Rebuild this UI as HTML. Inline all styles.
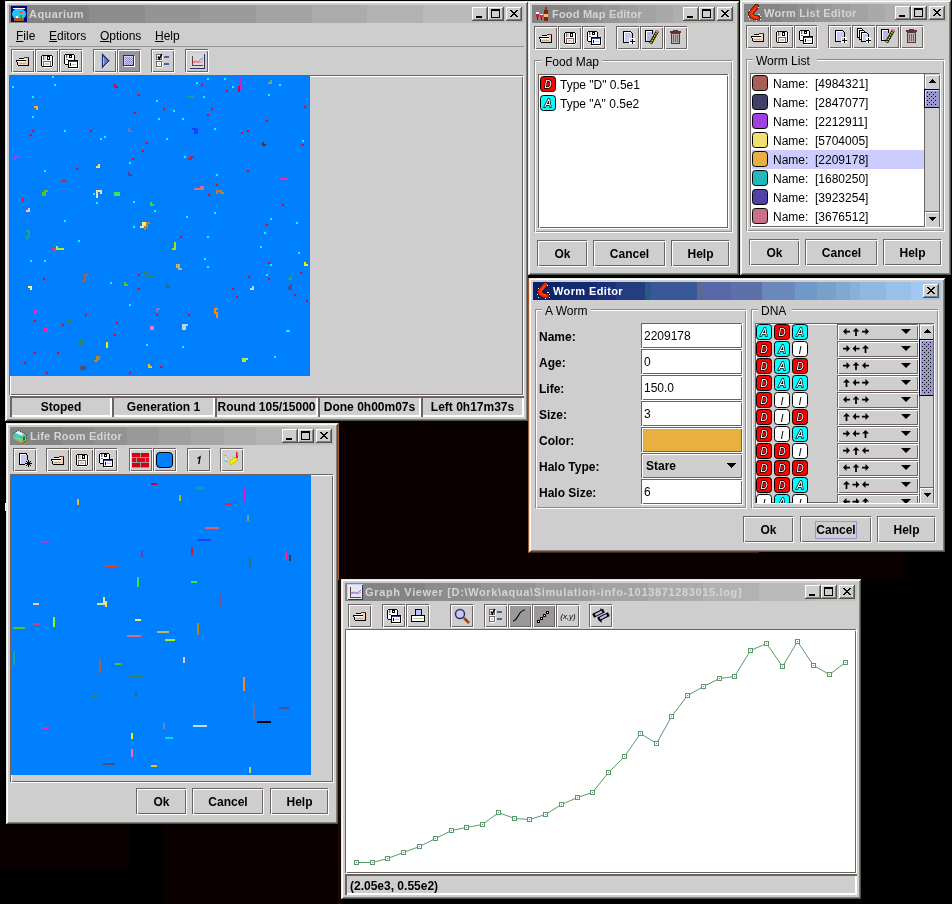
<!DOCTYPE html><html><head><meta charset="utf-8"><style>
html,body{margin:0;padding:0}
body{width:952px;height:904px;position:relative;overflow:hidden;background:#000;font-family:"Liberation Sans",sans-serif}
.a{position:absolute;box-sizing:border-box}
.t{white-space:nowrap}
svg.a{overflow:visible}
</style></head><body><div style="position:absolute;left:0;top:0;width:952px;height:904px;will-change:transform">
<div class="a" style="left:0px;top:421px;width:338px;height:3px;background:#0a0000"></div>
<div class="a" style="left:338px;top:421px;width:191px;height:158px;background:#0a0000"></div>
<div class="a" style="left:529px;top:552px;width:376px;height:27px;background:#0a0000"></div>
<div class="a" style="left:0px;top:824px;width:130px;height:44px;background:#0a0000"></div>
<div class="a" style="left:163px;top:824px;width:178px;height:80px;background:#0a0000"></div>
<div class="a" style="left:338px;top:579px;width:3px;height:325px;background:#1a0804"></div>
<div class="a" style="left:338px;top:423px;width:1px;height:157px;background:#a05828"></div>
<div class="a" style="left:5px;top:503px;width:1px;height:8px;background:#fff"></div>
<div class="a" style="left:528px;top:278px;width:1px;height:275px;background:#a05828"></div>
<div class="a" style="left:529px;top:552px;width:230px;height:1px;background:#4a2410"></div>
<div class="a" style="left:5px;top:1px;width:523px;height:420px;background:#cecece;box-shadow:inset 1px 1px #e4e4e4,inset -1px -1px #4c5446,inset 2px 2px #fff,inset -2px -2px #808080"></div>
<div class="a" style="left:9px;top:5px;width:515px;height:18px;background:linear-gradient(to right,#848484 0px,#848484 80px,#8c8c8c 80px,#8c8c8c 136px,#949494 136px,#949494 191px,#9b9b9b 191px,#9b9b9b 247px,#a3a3a3 247px,#a3a3a3 303px,#ababab 303px,#ababab 358px,#b2b2b2 358px,#b2b2b2 414px,#bababa 414px,#bababa 470px,#c2c2c2 470px,#c2c2c2 515px)"></div>
<svg class="a" style="left:11px;top:6px" width="16" height="16" viewBox="0 0 16 16" shape-rendering="crispEdges"><rect x="0" y="0" width="16" height="16" fill="#000080"/><ellipse cx="8" cy="8" rx="7" ry="6" fill="#20c8ff" shape-rendering="geometricPrecision"/><rect x="2" y="2" width="12" height="1" fill="#fff"/><rect x="8" y="5" width="4" height="2" fill="#ff6010"/><rect x="5" y="10" width="2" height="2" fill="#fff"/><rect x="9" y="9" width="2" height="3" fill="#20b020"/><rect x="3" y="12" width="10" height="3" fill="#a06020"/></svg>
<div class="a t" style="left:29px;top:9px;font-size:11px;line-height:11px;font-weight:bold;color:#d4d4d4;letter-spacing:0.46px">Aquarium</div>
<div class="a" style="left:506px;top:7px;width:16px;height:14px;background:#cecece;box-shadow:inset -1px -1px #4c5446,inset 1px 1px #fff,inset -2px -2px #808080"></div>
<svg class="a" style="left:510px;top:10px" width="8" height="7" viewBox="0 0 8 7" shape-rendering="crispEdges"><path d="M0 0h2v1h1v1h2v-1h1v-1h2v1h-1v1h-1v1h-1v1h1v1h1v1h1v1h-2v-1h-1v-1h-2v1h-1v1h-2v-1h1v-1h1v-1h1v-1h-1v-1h-1v-1h-1z" fill="#000"/></svg>
<div class="a" style="left:488px;top:7px;width:16px;height:14px;background:#cecece;box-shadow:inset -1px -1px #4c5446,inset 1px 1px #fff,inset -2px -2px #808080"></div>
<div class="a" style="left:491px;top:9px;width:9px;height:9px;border:1px solid #000;border-top-width:2px"></div>
<div class="a" style="left:472px;top:7px;width:16px;height:14px;background:#cecece;box-shadow:inset -1px -1px #4c5446,inset 1px 1px #fff,inset -2px -2px #808080"></div>
<div class="a" style="left:476px;top:16px;width:6px;height:2px;background:#000"></div>
<div class="a t" style="left:16px;top:30px;font-size:12px;line-height:12px;font-weight:normal;color:#000;"><u>F</u>ile</div>
<div class="a t" style="left:49px;top:30px;font-size:12px;line-height:12px;font-weight:normal;color:#000;"><u>E</u>ditors</div>
<div class="a t" style="left:100px;top:30px;font-size:12px;line-height:12px;font-weight:normal;color:#000;"><u>O</u>ptions</div>
<div class="a t" style="left:155px;top:30px;font-size:12px;line-height:12px;font-weight:normal;color:#000;"><u>H</u>elp</div>
<div class="a" style="left:9px;top:46px;width:515px;height:1px;background:#999999"></div>
<div class="a" style="left:11px;top:49px;width:23px;height:23px;border:1px solid #6c6462"></div>
<div class="a" style="left:12px;top:50px;width:23px;height:23px;border:1px solid #fff"></div>
<svg class="a" style="left:11px;top:49px" width="24" height="24" viewBox="0 0 24 24" shape-rendering="crispEdges"><rect x="8" y="9" width="5" height="1" fill="#000"/><rect x="13" y="8" width="5" height="1" fill="#703020"/><rect x="17" y="9" width="1" height="8" fill="#000"/><rect x="8" y="10" width="9" height="1" fill="#fff"/><rect x="14" y="9" width="3" height="1" fill="#f0d8b8"/><rect x="5" y="11" width="11" height="1" fill="#000"/><rect x="6" y="12" width="10" height="1" fill="#fff"/><rect x="15" y="10" width="2" height="5" fill="#f0d0a8"/><rect x="5" y="12" width="1" height="1" fill="#000"/><rect x="6" y="13" width="1" height="3" fill="#000"/><rect x="7" y="16" width="11" height="1" fill="#000"/><rect x="7" y="13" width="9" height="3" fill="#f0d8b8"/><rect x="8" y="14" width="7" height="1" fill="#c8a888"/></svg>
<div class="a" style="left:35px;top:49px;width:23px;height:23px;border:1px solid #6c6462"></div>
<div class="a" style="left:36px;top:50px;width:23px;height:23px;border:1px solid #fff"></div>
<svg class="a" style="left:35px;top:49px" width="24" height="24" viewBox="0 0 24 24" shape-rendering="crispEdges"><rect x="7" y="6" width="10" height="1" fill="#000"/><rect x="7" y="17" width="10" height="1" fill="#000"/><rect x="6" y="7" width="1" height="10" fill="#000"/><rect x="17" y="7" width="1" height="10" fill="#000"/><rect x="7" y="7" width="10" height="10" fill="#fff"/><rect x="8" y="7" width="1" height="4" fill="#806860"/><rect x="9" y="7" width="2" height="4" fill="#d0d0d0"/><rect x="12" y="7" width="3" height="4" fill="#000"/><rect x="13" y="8" width="1" height="2" fill="#fff"/><rect x="8" y="12" width="8" height="1" fill="#806860"/><rect x="8" y="12" width="1" height="5" fill="#806860"/><rect x="15" y="12" width="1" height="5" fill="#806860"/><rect x="10" y="14" width="4" height="2" fill="#c8c8c8"/><rect x="8" y="18" width="9" height="1" fill="#fff"/><rect x="18" y="8" width="1" height="9" fill="#fff"/></svg>
<div class="a" style="left:59px;top:49px;width:23px;height:23px;border:1px solid #6c6462"></div>
<div class="a" style="left:60px;top:50px;width:23px;height:23px;border:1px solid #fff"></div>
<svg class="a" style="left:59px;top:49px" width="24" height="24" viewBox="0 0 24 24" shape-rendering="crispEdges"><rect x="6" y="5" width="9" height="1" fill="#000"/><rect x="5" y="6" width="1" height="9" fill="#000"/><rect x="15" y="6" width="1" height="6" fill="#000"/><rect x="6" y="15" width="3" height="1" fill="#000"/><rect x="6" y="6" width="9" height="9" fill="#fff"/><rect x="7" y="6" width="1" height="3" fill="#806860"/><rect x="8" y="6" width="1" height="3" fill="#d0d0d0"/><rect x="10" y="6" width="3" height="3" fill="#000"/><rect x="11" y="7" width="1" height="1" fill="#fff"/><rect x="7" y="10" width="2" height="1" fill="#806860"/><rect x="9" y="11" width="10" height="1" fill="#000"/><rect x="9" y="12" width="1" height="6" fill="#000"/><rect x="18" y="12" width="1" height="6" fill="#000"/><rect x="9" y="18" width="10" height="1" fill="#000"/><rect x="10" y="12" width="8" height="1" fill="#3040a0"/><rect x="10" y="13" width="8" height="5" fill="#fff"/><rect x="11" y="14" width="1" height="3" fill="#000"/><rect x="13" y="15" width="4" height="1" fill="#c0c0c0"/><rect x="10" y="19" width="9" height="1" fill="#fff"/><rect x="19" y="12" width="1" height="7" fill="#fff"/></svg>
<div class="a" style="left:93px;top:49px;width:23px;height:23px;border:1px solid #6c6462"></div>
<div class="a" style="left:94px;top:50px;width:23px;height:23px;border:1px solid #fff"></div>
<svg class="a" style="left:93px;top:49px" width="24" height="24" viewBox="0 0 24 24" shape-rendering="crispEdges"><path d="M9.5 5.5 L16 12 L9.5 18.5 Z" fill="#7080b8" stroke="#1a2a80" stroke-width="1.2" shape-rendering="geometricPrecision"/><rect x="10" y="8" width="1" height="8" fill="#b0b8e8"/><path d="M10 19.3 L16.7 12.6" stroke="#fff" stroke-width="1" shape-rendering="geometricPrecision"/></svg>
<div class="a" style="left:117px;top:49px;width:24px;height:24px;background:#999999"></div>
<div class="a" style="left:117px;top:49px;width:23px;height:23px;border:1px solid #6c6462"></div>
<div class="a" style="left:118px;top:50px;width:23px;height:23px;border:1px solid #fff"></div>
<svg class="a" style="left:117px;top:49px" width="24" height="24" viewBox="0 0 24 24" shape-rendering="crispEdges"><rect x="6" y="6" width="11" height="11" fill="#1a2a80"/><rect x="7" y="7" width="9" height="9" fill="#d0d0ff"/><rect x="8" y="8" width="1" height="1" fill="#8888c0"/><rect x="10" y="8" width="1" height="1" fill="#8888c0"/><rect x="12" y="8" width="1" height="1" fill="#8888c0"/><rect x="14" y="8" width="1" height="1" fill="#8888c0"/><rect x="9" y="9" width="1" height="1" fill="#8888c0"/><rect x="11" y="9" width="1" height="1" fill="#8888c0"/><rect x="13" y="9" width="1" height="1" fill="#8888c0"/><rect x="15" y="9" width="1" height="1" fill="#8888c0"/><rect x="8" y="10" width="1" height="1" fill="#8888c0"/><rect x="10" y="10" width="1" height="1" fill="#8888c0"/><rect x="12" y="10" width="1" height="1" fill="#8888c0"/><rect x="14" y="10" width="1" height="1" fill="#8888c0"/><rect x="9" y="11" width="1" height="1" fill="#8888c0"/><rect x="11" y="11" width="1" height="1" fill="#8888c0"/><rect x="13" y="11" width="1" height="1" fill="#8888c0"/><rect x="15" y="11" width="1" height="1" fill="#8888c0"/><rect x="8" y="12" width="1" height="1" fill="#8888c0"/><rect x="10" y="12" width="1" height="1" fill="#8888c0"/><rect x="12" y="12" width="1" height="1" fill="#8888c0"/><rect x="14" y="12" width="1" height="1" fill="#8888c0"/><rect x="9" y="13" width="1" height="1" fill="#8888c0"/><rect x="11" y="13" width="1" height="1" fill="#8888c0"/><rect x="13" y="13" width="1" height="1" fill="#8888c0"/><rect x="15" y="13" width="1" height="1" fill="#8888c0"/><rect x="8" y="14" width="1" height="1" fill="#8888c0"/><rect x="10" y="14" width="1" height="1" fill="#8888c0"/><rect x="12" y="14" width="1" height="1" fill="#8888c0"/><rect x="14" y="14" width="1" height="1" fill="#8888c0"/><rect x="9" y="15" width="1" height="1" fill="#8888c0"/><rect x="11" y="15" width="1" height="1" fill="#8888c0"/><rect x="13" y="15" width="1" height="1" fill="#8888c0"/><rect x="15" y="15" width="1" height="1" fill="#8888c0"/><rect x="17" y="7" width="1" height="11" fill="#fff"/><rect x="7" y="17" width="11" height="1" fill="#fff"/></svg>
<div class="a" style="left:151px;top:49px;width:23px;height:23px;border:1px solid #6c6462"></div>
<div class="a" style="left:152px;top:50px;width:23px;height:23px;border:1px solid #fff"></div>
<svg class="a" style="left:151px;top:49px" width="24" height="24" viewBox="0 0 24 24" shape-rendering="crispEdges"><rect x="5" y="5" width="6" height="6" fill="#706864"/><rect x="6" y="6" width="4" height="4" fill="#fff"/><rect x="11" y="6" width="1" height="5" fill="#fff"/><rect x="6" y="11" width="5" height="1" fill="#fff"/><path d="M7 7.5 L8.3 9.8 L10.8 5" stroke="#000" stroke-width="1.6" fill="none" shape-rendering="geometricPrecision"/><rect x="5" y="12" width="6" height="6" fill="#706864"/><rect x="6" y="13" width="4" height="4" fill="#fff"/><rect x="7" y="14" width="2" height="2" fill="#d8d8d8"/><rect x="11" y="13" width="1" height="5" fill="#fff"/><rect x="6" y="18" width="5" height="1" fill="#fff"/><rect x="13" y="7" width="5" height="2" fill="#4a62a0"/><rect x="13" y="14" width="5" height="2" fill="#4a62a0"/></svg>
<div class="a" style="left:185px;top:49px;width:23px;height:23px;border:1px solid #6c6462"></div>
<div class="a" style="left:186px;top:50px;width:23px;height:23px;border:1px solid #fff"></div>
<svg class="a" style="left:185px;top:49px" width="24" height="24" viewBox="0 0 24 24" shape-rendering="crispEdges"><rect x="4" y="4" width="16" height="16" fill="#333366"/><rect x="4" y="4" width="16" height="1" fill="#ccccff"/><rect x="4" y="4" width="1" height="16" fill="#ccccff"/><rect x="5" y="5" width="14" height="14" fill="#d8d8d8"/><rect x="7" y="7" width="1" height="10" fill="#604040"/><rect x="7" y="16" width="11" height="1" fill="#604040"/><path d="M8 13 L11 12 L13 13 L15 11 L18 9" stroke="#8080e0" fill="none" shape-rendering="geometricPrecision"/><path d="M8 14 L11 13 L14 14 L18 12" stroke="#ff8080" fill="none" shape-rendering="geometricPrecision"/></svg>
<div class="a" style="left:9px;top:75px;width:514px;height:320px;border:1px solid #6c6462"></div>
<div class="a" style="left:10px;top:76px;width:514px;height:320px;border:1px solid #fff"></div>
<div class="a" style="left:10px;top:76px;width:300px;height:300px;background:#0080ff"></div>
<svg class="a" style="left:0;top:0" width="952" height="904" shape-rendering="crispEdges"><rect x="52" y="76" width="2" height="2" fill="#00ffff"/><rect x="54" y="84" width="2" height="2" fill="#00ffff"/><rect x="12" y="86" width="2" height="2" fill="#00ffff"/><rect x="156" y="100" width="2" height="2" fill="#00ffff"/><rect x="32" y="96" width="2" height="2" fill="#00ffff"/><rect x="32" y="116" width="2" height="2" fill="#00ffff"/><rect x="158" y="118" width="2" height="2" fill="#00ffff"/><rect x="64" y="130" width="2" height="2" fill="#00ffff"/><rect x="100" y="138" width="2" height="2" fill="#00ffff"/><rect x="104" y="136" width="2" height="2" fill="#00ffff"/><rect x="129" y="162" width="2" height="2" fill="#00ffff"/><rect x="44" y="170" width="2" height="2" fill="#00ffff"/><rect x="93" y="193" width="2" height="2" fill="#00ffff"/><rect x="96" y="202" width="2" height="2" fill="#00ffff"/><rect x="133" y="201" width="2" height="2" fill="#00ffff"/><rect x="154" y="210" width="2" height="2" fill="#00ffff"/><rect x="64" y="220" width="2" height="2" fill="#00ffff"/><rect x="207" y="78" width="2" height="2" fill="#00ffff"/><rect x="224" y="78" width="2" height="2" fill="#00ffff"/><rect x="196" y="82" width="2" height="2" fill="#00ffff"/><rect x="232" y="86" width="2" height="2" fill="#00ffff"/><rect x="279" y="84" width="2" height="2" fill="#00ffff"/><rect x="203" y="96" width="2" height="2" fill="#00ffff"/><rect x="268" y="94" width="2" height="2" fill="#00ffff"/><rect x="173" y="110" width="2" height="2" fill="#00ffff"/><rect x="182" y="118" width="2" height="2" fill="#00ffff"/><rect x="214" y="128" width="2" height="2" fill="#00ffff"/><rect x="166" y="138" width="2" height="2" fill="#00ffff"/><rect x="302" y="140" width="2" height="2" fill="#00ffff"/><rect x="184" y="156" width="2" height="2" fill="#00ffff"/><rect x="216" y="174" width="2" height="2" fill="#00ffff"/><rect x="214" y="212" width="2" height="2" fill="#00ffff"/><rect x="186" y="216" width="2" height="2" fill="#00ffff"/><rect x="270" y="218" width="2" height="2" fill="#00ffff"/><rect x="296" y="222" width="2" height="2" fill="#00ffff"/><rect x="133" y="226" width="2" height="2" fill="#00ffff"/><rect x="78" y="240" width="2" height="2" fill="#00ffff"/><rect x="30" y="260" width="2" height="2" fill="#00ffff"/><rect x="44" y="260" width="2" height="2" fill="#00ffff"/><rect x="110" y="282" width="2" height="2" fill="#00ffff"/><rect x="129" y="304" width="2" height="2" fill="#00ffff"/><rect x="146" y="344" width="2" height="2" fill="#00ffff"/><rect x="207" y="236" width="2" height="2" fill="#00ffff"/><rect x="264" y="232" width="2" height="2" fill="#00ffff"/><rect x="260" y="246" width="2" height="2" fill="#00ffff"/><rect x="298" y="252" width="2" height="2" fill="#00ffff"/><rect x="204" y="258" width="2" height="2" fill="#00ffff"/><rect x="207" y="266" width="2" height="2" fill="#00ffff"/><rect x="270" y="264" width="2" height="2" fill="#00ffff"/><rect x="266" y="274" width="2" height="2" fill="#00ffff"/><rect x="182" y="346" width="2" height="2" fill="#00ffff"/><rect x="274" y="356" width="2" height="2" fill="#00ffff"/><rect x="138" y="94" width="2" height="2" fill="#ff0000"/><rect x="134" y="112" width="2" height="2" fill="#ff0000"/><rect x="32" y="130" width="2" height="2" fill="#ff0000"/><rect x="30" y="134" width="2" height="2" fill="#ff0000"/><rect x="90" y="130" width="2" height="2" fill="#ff0000"/><rect x="146" y="142" width="2" height="2" fill="#ff0000"/><rect x="142" y="150" width="2" height="2" fill="#ff0000"/><rect x="132" y="158" width="2" height="2" fill="#ff0000"/><rect x="76" y="168" width="2" height="2" fill="#ff0000"/><rect x="201" y="84" width="2" height="2" fill="#ff0000"/><rect x="226" y="90" width="2" height="2" fill="#ff0000"/><rect x="163" y="108" width="2" height="2" fill="#ff0000"/><rect x="211" y="108" width="2" height="2" fill="#ff0000"/><rect x="207" y="114" width="2" height="2" fill="#ff0000"/><rect x="304" y="106" width="2" height="2" fill="#ff0000"/><rect x="266" y="120" width="2" height="2" fill="#ff0000"/><rect x="247" y="130" width="2" height="2" fill="#ff0000"/><rect x="241" y="132" width="2" height="2" fill="#ff0000"/><rect x="302" y="144" width="2" height="2" fill="#ff0000"/><rect x="247" y="170" width="2" height="2" fill="#ff0000"/><rect x="216" y="184" width="2" height="2" fill="#ff0000"/><rect x="208" y="194" width="2" height="2" fill="#ff0000"/><rect x="282" y="204" width="2" height="2" fill="#ff0000"/><rect x="266" y="224" width="2" height="2" fill="#ff0000"/><rect x="43" y="278" width="2" height="2" fill="#ff0000"/><rect x="138" y="274" width="2" height="2" fill="#ff0000"/><rect x="138" y="288" width="2" height="2" fill="#ff0000"/><rect x="85" y="314" width="2" height="2" fill="#ff0000"/><rect x="156" y="314" width="2" height="2" fill="#ff0000"/><rect x="34" y="320" width="2" height="2" fill="#ff0000"/><rect x="62" y="324" width="2" height="2" fill="#ff0000"/><rect x="116" y="322" width="2" height="2" fill="#ff0000"/><rect x="114" y="334" width="2" height="2" fill="#ff0000"/><rect x="34" y="352" width="2" height="2" fill="#ff0000"/><rect x="57" y="352" width="2" height="2" fill="#ff0000"/><rect x="24" y="362" width="2" height="2" fill="#ff0000"/><rect x="46" y="372" width="2" height="2" fill="#ff0000"/><rect x="129" y="372" width="2" height="2" fill="#ff0000"/><rect x="180" y="236" width="2" height="2" fill="#ff0000"/><rect x="268" y="262" width="2" height="2" fill="#ff0000"/><rect x="248" y="276" width="2" height="2" fill="#ff0000"/><rect x="268" y="278" width="2" height="2" fill="#ff0000"/><rect x="300" y="272" width="2" height="2" fill="#ff0000"/><rect x="232" y="288" width="2" height="2" fill="#ff0000"/><rect x="294" y="294" width="2" height="2" fill="#ff0000"/><rect x="236" y="296" width="2" height="2" fill="#ff0000"/><rect x="306" y="300" width="2" height="2" fill="#ff0000"/><rect x="188" y="314" width="2" height="2" fill="#ff0000"/><rect x="160" y="366" width="2" height="2" fill="#ff0000"/><rect x="114" y="84" width="2" height="4" fill="#cc1044"/><rect x="114" y="86" width="4" height="2" fill="#cc1044"/><rect x="34" y="106" width="4" height="2" fill="#f0b030"/><rect x="36" y="106" width="2" height="4" fill="#f0b030"/><rect x="128" y="128" width="2" height="4" fill="#6878c0"/><rect x="128" y="130" width="4" height="2" fill="#6878c0"/><rect x="14" y="156" width="6" height="2" fill="#a040e0"/><rect x="14" y="156" width="2" height="4" fill="#a040e0"/><rect x="98" y="164" width="2" height="4" fill="#f0e060"/><rect x="96" y="166" width="4" height="2" fill="#f0e060"/><rect x="128" y="172" width="2" height="4" fill="#5040a0"/><rect x="128" y="174" width="4" height="2" fill="#5040a0"/><rect x="62" y="180" width="4" height="2" fill="#ff1010"/><rect x="44" y="190" width="4" height="2" fill="#60c020"/><rect x="42" y="192" width="4" height="4" fill="#60c020"/><rect x="96" y="190" width="6" height="2" fill="#e8e0a0"/><rect x="96" y="190" width="2" height="8" fill="#e8e0a0"/><rect x="100" y="190" width="2" height="4" fill="#e8e0a0"/><rect x="114" y="192" width="6" height="4" fill="#40e060"/><rect x="22" y="198" width="2" height="4" fill="#ff1010"/><rect x="150" y="202" width="2" height="4" fill="#40d060"/><rect x="150" y="204" width="4" height="2" fill="#40d060"/><rect x="28" y="208" width="2" height="4" fill="#ffc0c0"/><rect x="26" y="210" width="4" height="2" fill="#ffc0c0"/><rect x="142" y="222" width="4" height="4" fill="#f8f080"/><rect x="146" y="222" width="4" height="2" fill="#c08020"/><rect x="146" y="222" width="2" height="4" fill="#c08020"/><rect x="240" y="78" width="2" height="12" fill="#d020c0"/><rect x="240" y="88" width="4" height="2" fill="#d020c0"/><rect x="238" y="86" width="2" height="6" fill="#d00040"/><rect x="270" y="80" width="2" height="4" fill="#70a090"/><rect x="268" y="82" width="4" height="2" fill="#70a090"/><rect x="188" y="96" width="6" height="2" fill="#20a080"/><rect x="192" y="128" width="6" height="2" fill="#2040ff"/><rect x="194" y="128" width="4" height="6" fill="#2040ff"/><rect x="262" y="142" width="2" height="4" fill="#603020"/><rect x="262" y="144" width="4" height="2" fill="#603020"/><rect x="190" y="156" width="4" height="2" fill="#c02040"/><rect x="188" y="158" width="4" height="2" fill="#c02040"/><rect x="280" y="178" width="8" height="2" fill="#ff20a0"/><rect x="194" y="188" width="10" height="2" fill="#d07080"/><rect x="200" y="186" width="4" height="2" fill="#d07080"/><rect x="216" y="190" width="6" height="2" fill="#c08020"/><rect x="216" y="190" width="2" height="4" fill="#c08020"/><rect x="220" y="192" width="4" height="2" fill="#c08020"/><rect x="140" y="226" width="4" height="2" fill="#f0e8a0"/><rect x="144" y="226" width="4" height="2" fill="#c08020"/><rect x="144" y="226" width="2" height="4" fill="#c08020"/><rect x="26" y="230" width="4" height="2" fill="#20a090"/><rect x="28" y="230" width="2" height="8" fill="#20a090"/><rect x="26" y="236" width="2" height="4" fill="#20a090"/><rect x="52" y="248" width="4" height="2" fill="#e04060"/><rect x="54" y="248" width="2" height="4" fill="#e04060"/><rect x="56" y="246" width="2" height="4" fill="#a0f040"/><rect x="56" y="248" width="8" height="2" fill="#a0f040"/><rect x="84" y="274" width="4" height="2" fill="#b06040"/><rect x="84" y="274" width="2" height="8" fill="#b06040"/><rect x="82" y="280" width="4" height="2" fill="#b06040"/><rect x="144" y="272" width="4" height="2" fill="#408060"/><rect x="146" y="272" width="2" height="6" fill="#408060"/><rect x="146" y="276" width="8" height="2" fill="#408060"/><rect x="124" y="282" width="2" height="4" fill="#60c020"/><rect x="124" y="284" width="4" height="2" fill="#60c020"/><rect x="28" y="286" width="4" height="2" fill="#fff080"/><rect x="30" y="286" width="2" height="4" fill="#fff080"/><rect x="156" y="308" width="4" height="2" fill="#7080c0"/><rect x="156" y="308" width="2" height="4" fill="#7080c0"/><rect x="34" y="310" width="4" height="2" fill="#ff20c0"/><rect x="34" y="310" width="2" height="4" fill="#ff20c0"/><rect x="68" y="320" width="4" height="2" fill="#408040"/><rect x="68" y="320" width="2" height="4" fill="#408040"/><rect x="44" y="328" width="4" height="4" fill="#ff20a0"/><rect x="150" y="326" width="4" height="4" fill="#ff70c0"/><rect x="80" y="340" width="4" height="6" fill="#308070"/><rect x="78" y="342" width="2" height="2" fill="#308070"/><rect x="106" y="342" width="2" height="6" fill="#f0f000"/><rect x="96" y="356" width="4" height="4" fill="#c08020"/><rect x="94" y="360" width="4" height="2" fill="#c08020"/><rect x="80" y="366" width="6" height="4" fill="#505070"/><rect x="148" y="364" width="2" height="4" fill="#f0c020"/><rect x="148" y="366" width="4" height="2" fill="#f0c020"/><rect x="174" y="242" width="2" height="8" fill="#a0e020"/><rect x="172" y="248" width="4" height="2" fill="#a0e020"/><rect x="176" y="264" width="4" height="4" fill="#c0b070"/><rect x="178" y="268" width="4" height="2" fill="#c0b070"/><rect x="304" y="262" width="2" height="4" fill="#f0f000"/><rect x="304" y="264" width="4" height="2" fill="#f0f000"/><rect x="290" y="276" width="2" height="4" fill="#20a080"/><rect x="288" y="278" width="4" height="2" fill="#20a080"/><rect x="166" y="284" width="2" height="4" fill="#207090"/><rect x="166" y="286" width="4" height="2" fill="#207090"/><rect x="252" y="286" width="2" height="4" fill="#c0d8f0"/><rect x="250" y="288" width="4" height="2" fill="#c0d8f0"/><rect x="290" y="284" width="2" height="6" fill="#405090"/><rect x="288" y="286" width="4" height="4" fill="#405090"/><rect x="214" y="308" width="4" height="2" fill="#ff8020"/><rect x="214" y="308" width="2" height="6" fill="#ff8020"/><rect x="214" y="312" width="4" height="2" fill="#ff8020"/><rect x="216" y="312" width="2" height="6" fill="#ff8020"/><rect x="182" y="324" width="6" height="2" fill="#c0d0e0"/><rect x="182" y="324" width="4" height="6" fill="#c0d0e0"/><rect x="286" y="330" width="4" height="2" fill="#00ffff"/><rect x="242" y="358" width="6" height="2" fill="#b0f040"/><rect x="242" y="358" width="4" height="4" fill="#b0f040"/></svg>
<div class="a" style="left:10px;top:396px;width:102px;height:21px;box-shadow:inset 2px 2px #6c6462,inset -2px -2px #fff"></div>
<div class="a t" style="left:10px;width:102px;text-align:center;top:401px;font-size:12px;line-height:12px;font-weight:bold;color:#000;">Stoped</div>
<div class="a" style="left:112px;top:396px;width:103px;height:21px;box-shadow:inset 2px 2px #6c6462,inset -2px -2px #fff"></div>
<div class="a t" style="left:112px;width:103px;text-align:center;top:401px;font-size:12px;line-height:12px;font-weight:bold;color:#000;">Generation 1</div>
<div class="a" style="left:215px;top:396px;width:103px;height:21px;box-shadow:inset 2px 2px #6c6462,inset -2px -2px #fff"></div>
<div class="a t" style="left:215px;width:103px;text-align:center;top:401px;font-size:12px;line-height:12px;font-weight:bold;color:#000;">Round 105/15000</div>
<div class="a" style="left:318px;top:396px;width:103px;height:21px;box-shadow:inset 2px 2px #6c6462,inset -2px -2px #fff"></div>
<div class="a t" style="left:318px;width:103px;text-align:center;top:401px;font-size:12px;line-height:12px;font-weight:bold;color:#000;">Done 0h00m07s</div>
<div class="a" style="left:421px;top:396px;width:103px;height:21px;box-shadow:inset 2px 2px #6c6462,inset -2px -2px #fff"></div>
<div class="a t" style="left:421px;width:103px;text-align:center;top:401px;font-size:12px;line-height:12px;font-weight:bold;color:#000;">Left 0h17m37s</div>
<div class="a" style="left:528px;top:1px;width:211px;height:274px;background:#cecece;box-shadow:inset 1px 1px #e4e4e4,inset -1px -1px #4c5446,inset 2px 2px #fff,inset -2px -2px #808080"></div>
<div class="a" style="left:532px;top:5px;width:203px;height:18px;background:linear-gradient(to right,#848484 0px,#848484 36px,#8a8a8a 36px,#8a8a8a 54px,#909090 54px,#909090 71px,#979797 71px,#979797 88px,#9d9d9d 88px,#9d9d9d 106px,#a3a3a3 106px,#a3a3a3 124px,#a9a9a9 124px,#a9a9a9 141px,#afafaf 141px,#afafaf 158px,#b6b6b6 158px,#b6b6b6 176px,#bcbcbc 176px,#bcbcbc 194px,#c2c2c2 194px,#c2c2c2 203px)"></div>
<svg class="a" style="left:534px;top:6px" width="16" height="16" viewBox="0 0 16 16" shape-rendering="crispEdges"><rect x="2" y="6" width="3" height="5" fill="#c02030"/><rect x="2" y="6" width="3" height="2" fill="#fff"/><rect x="3" y="11" width="1" height="3" fill="#402020"/><rect x="6" y="8" width="3" height="4" fill="#e02040"/><rect x="6" y="8" width="3" height="1" fill="#fff"/><rect x="7" y="12" width="1" height="2" fill="#402020"/><rect x="11" y="1" width="2" height="3" fill="#c02030"/><rect x="10" y="4" width="4" height="11" fill="#802010"/><rect x="10" y="8" width="4" height="3" fill="#f0c080"/></svg>
<div class="a t" style="left:552px;top:9px;font-size:11px;line-height:11px;font-weight:bold;color:#d4d4d4;letter-spacing:0.21px">Food Map Editor</div>
<div class="a" style="left:717px;top:7px;width:16px;height:14px;background:#cecece;box-shadow:inset -1px -1px #4c5446,inset 1px 1px #fff,inset -2px -2px #808080"></div>
<svg class="a" style="left:721px;top:10px" width="8" height="7" viewBox="0 0 8 7" shape-rendering="crispEdges"><path d="M0 0h2v1h1v1h2v-1h1v-1h2v1h-1v1h-1v1h-1v1h1v1h1v1h1v1h-2v-1h-1v-1h-2v1h-1v1h-2v-1h1v-1h1v-1h1v-1h-1v-1h-1v-1h-1z" fill="#000"/></svg>
<div class="a" style="left:699px;top:7px;width:16px;height:14px;background:#cecece;box-shadow:inset -1px -1px #4c5446,inset 1px 1px #fff,inset -2px -2px #808080"></div>
<div class="a" style="left:702px;top:9px;width:9px;height:9px;border:1px solid #000;border-top-width:2px"></div>
<div class="a" style="left:683px;top:7px;width:16px;height:14px;background:#cecece;box-shadow:inset -1px -1px #4c5446,inset 1px 1px #fff,inset -2px -2px #808080"></div>
<div class="a" style="left:687px;top:16px;width:6px;height:2px;background:#000"></div>
<div class="a" style="left:534px;top:26px;width:23px;height:23px;border:1px solid #6c6462"></div>
<div class="a" style="left:535px;top:27px;width:23px;height:23px;border:1px solid #fff"></div>
<svg class="a" style="left:534px;top:26px" width="24" height="24" viewBox="0 0 24 24" shape-rendering="crispEdges"><rect x="8" y="9" width="5" height="1" fill="#000"/><rect x="13" y="8" width="5" height="1" fill="#703020"/><rect x="17" y="9" width="1" height="8" fill="#000"/><rect x="8" y="10" width="9" height="1" fill="#fff"/><rect x="14" y="9" width="3" height="1" fill="#f0d8b8"/><rect x="5" y="11" width="11" height="1" fill="#000"/><rect x="6" y="12" width="10" height="1" fill="#fff"/><rect x="15" y="10" width="2" height="5" fill="#f0d0a8"/><rect x="5" y="12" width="1" height="1" fill="#000"/><rect x="6" y="13" width="1" height="3" fill="#000"/><rect x="7" y="16" width="11" height="1" fill="#000"/><rect x="7" y="13" width="9" height="3" fill="#f0d8b8"/><rect x="8" y="14" width="7" height="1" fill="#c8a888"/></svg>
<div class="a" style="left:558px;top:26px;width:23px;height:23px;border:1px solid #6c6462"></div>
<div class="a" style="left:559px;top:27px;width:23px;height:23px;border:1px solid #fff"></div>
<svg class="a" style="left:558px;top:26px" width="24" height="24" viewBox="0 0 24 24" shape-rendering="crispEdges"><rect x="7" y="6" width="10" height="1" fill="#000"/><rect x="7" y="17" width="10" height="1" fill="#000"/><rect x="6" y="7" width="1" height="10" fill="#000"/><rect x="17" y="7" width="1" height="10" fill="#000"/><rect x="7" y="7" width="10" height="10" fill="#fff"/><rect x="8" y="7" width="1" height="4" fill="#806860"/><rect x="9" y="7" width="2" height="4" fill="#d0d0d0"/><rect x="12" y="7" width="3" height="4" fill="#000"/><rect x="13" y="8" width="1" height="2" fill="#fff"/><rect x="8" y="12" width="8" height="1" fill="#806860"/><rect x="8" y="12" width="1" height="5" fill="#806860"/><rect x="15" y="12" width="1" height="5" fill="#806860"/><rect x="10" y="14" width="4" height="2" fill="#c8c8c8"/><rect x="8" y="18" width="9" height="1" fill="#fff"/><rect x="18" y="8" width="1" height="9" fill="#fff"/></svg>
<div class="a" style="left:582px;top:26px;width:23px;height:23px;border:1px solid #6c6462"></div>
<div class="a" style="left:583px;top:27px;width:23px;height:23px;border:1px solid #fff"></div>
<svg class="a" style="left:582px;top:26px" width="24" height="24" viewBox="0 0 24 24" shape-rendering="crispEdges"><rect x="6" y="5" width="9" height="1" fill="#000"/><rect x="5" y="6" width="1" height="9" fill="#000"/><rect x="15" y="6" width="1" height="6" fill="#000"/><rect x="6" y="15" width="3" height="1" fill="#000"/><rect x="6" y="6" width="9" height="9" fill="#fff"/><rect x="7" y="6" width="1" height="3" fill="#806860"/><rect x="8" y="6" width="1" height="3" fill="#d0d0d0"/><rect x="10" y="6" width="3" height="3" fill="#000"/><rect x="11" y="7" width="1" height="1" fill="#fff"/><rect x="7" y="10" width="2" height="1" fill="#806860"/><rect x="9" y="11" width="10" height="1" fill="#000"/><rect x="9" y="12" width="1" height="6" fill="#000"/><rect x="18" y="12" width="1" height="6" fill="#000"/><rect x="9" y="18" width="10" height="1" fill="#000"/><rect x="10" y="12" width="8" height="1" fill="#3040a0"/><rect x="10" y="13" width="8" height="5" fill="#fff"/><rect x="11" y="14" width="1" height="3" fill="#000"/><rect x="13" y="15" width="4" height="1" fill="#c0c0c0"/><rect x="10" y="19" width="9" height="1" fill="#fff"/><rect x="19" y="12" width="1" height="7" fill="#fff"/></svg>
<div class="a" style="left:616px;top:26px;width:23px;height:23px;border:1px solid #6c6462"></div>
<div class="a" style="left:617px;top:27px;width:23px;height:23px;border:1px solid #fff"></div>
<svg class="a" style="left:616px;top:26px" width="24" height="24" viewBox="0 0 24 24" shape-rendering="crispEdges"><rect x="7" y="5" width="8" height="1" fill="#000"/><rect x="7" y="5" width="1" height="12" fill="#000"/><rect x="7" y="16" width="10" height="1" fill="#000"/><rect x="16" y="8" width="1" height="9" fill="#000"/><rect x="15" y="6" width="1" height="1" fill="#000"/><rect x="16" y="7" width="1" height="1" fill="#000"/><rect x="8" y="6" width="7" height="10" fill="#fff"/><rect x="9" y="7" width="6" height="9" fill="#c8c8f0"/><rect x="15" y="8" width="1" height="8" fill="#c8c8f0"/><rect x="13" y="12" width="6" height="6" fill="#fff"/><rect x="16" y="13" width="1" height="5" fill="#000"/><rect x="14" y="15" width="5" height="1" fill="#000"/><rect x="14" y="13" width="2" height="2" fill="#c8c8f0"/></svg>
<div class="a" style="left:640px;top:26px;width:23px;height:23px;border:1px solid #6c6462"></div>
<div class="a" style="left:641px;top:27px;width:23px;height:23px;border:1px solid #fff"></div>
<svg class="a" style="left:640px;top:26px" width="24" height="24" viewBox="0 0 24 24" shape-rendering="crispEdges"><rect x="5" y="4" width="8" height="1" fill="#000"/><rect x="5" y="4" width="1" height="12" fill="#000"/><rect x="5" y="15" width="7" height="1" fill="#000"/><rect x="12" y="4" width="1" height="4" fill="#000"/><rect x="6" y="5" width="6" height="10" fill="#fff"/><rect x="7" y="6" width="5" height="9" fill="#b8b8e8"/><path d="M17.5 5 L10.5 17.5" stroke="#000" stroke-width="3.2" shape-rendering="geometricPrecision"/><path d="M17.5 5 L10.5 17.5" stroke="#e8e020" stroke-width="1.6" stroke-dasharray="1.5 1" shape-rendering="geometricPrecision"/><path d="M17.8 4.3 L16.6 6.5" stroke="#f08080" stroke-width="2" shape-rendering="geometricPrecision"/></svg>
<div class="a" style="left:664px;top:26px;width:23px;height:23px;border:1px solid #6c6462"></div>
<div class="a" style="left:665px;top:27px;width:23px;height:23px;border:1px solid #fff"></div>
<svg class="a" style="left:664px;top:26px" width="24" height="24" viewBox="0 0 24 24" shape-rendering="crispEdges"><rect x="9" y="4" width="5" height="1" fill="#663333"/><rect x="6" y="5" width="11" height="2" fill="#663333"/><rect x="7" y="7" width="9" height="1" fill="#663333"/><rect x="7" y="8" width="1" height="9" fill="#663333"/><rect x="15" y="8" width="1" height="9" fill="#663333"/><rect x="7" y="17" width="9" height="1" fill="#663333"/><rect x="8" y="8" width="7" height="9" fill="#b8b0b0"/><rect x="9" y="9" width="1" height="7" fill="#806060"/><rect x="11" y="9" width="1" height="7" fill="#806060"/><rect x="13" y="9" width="1" height="7" fill="#806060"/></svg>
<div class="a" style="left:534px;top:60px;width:198px;height:172px;border:1px solid #8c8c8c"></div>
<div class="a" style="left:535px;top:61px;width:198px;height:172px;border:1px solid #fff"></div>
<div class="a" style="left:542px;top:60px;width:60px;height:2px;background:#cecece"></div>
<div class="a t" style="left:545px;top:56px;font-size:12px;line-height:12px;font-weight:normal;color:#000;">Food Map</div>
<div class="a" style="left:538px;top:74px;width:191px;height:155px;background:#fff"></div>
<div class="a" style="left:538px;top:74px;width:190px;height:154px;border:1px solid #6c6462"></div>
<div class="a" style="left:539px;top:75px;width:190px;height:154px;border:1px solid #fff"></div>
<svg class="a" style="left:540px;top:76px" width="16" height="16" viewBox="0 0 16 16" shape-rendering="crispEdges"><rect x="0.5" y="0.5" width="15" height="15" rx="3" fill="#ff0000" stroke="#000" shape-rendering="geometricPrecision"/><text x="8" y="12.5" font-family="Liberation Sans" font-size="11" font-style="italic" text-anchor="middle" fill="#fff" stroke="#000" stroke-width="1.6" paint-order="stroke" transform="translate(8 0) scale(0.9 1) translate(-8 0)">D</text></svg>
<div class="a t" style="left:560px;top:79px;font-size:12px;line-height:12px;font-weight:normal;color:#000;">Type "D" 0.5e1</div>
<svg class="a" style="left:540px;top:95px" width="16" height="16" viewBox="0 0 16 16" shape-rendering="crispEdges"><rect x="0.5" y="0.5" width="15" height="15" rx="3" fill="#00ffff" stroke="#000" shape-rendering="geometricPrecision"/><text x="8" y="12.5" font-family="Liberation Sans" font-size="11" font-style="italic" text-anchor="middle" fill="#fff" stroke="#000" stroke-width="1.6" paint-order="stroke" transform="translate(8 0) scale(0.9 1) translate(-8 0)">A</text></svg>
<div class="a t" style="left:560px;top:98px;font-size:12px;line-height:12px;font-weight:normal;color:#000;">Type "A" 0.5e2</div>
<div class="a" style="left:537px;top:240px;width:50px;height:26px;border:1px solid #6c6462"></div>
<div class="a" style="left:538px;top:241px;width:50px;height:26px;border:1px solid #fff"></div>
<div class="a t" style="left:537px;width:51px;text-align:center;top:248px;font-size:12px;line-height:12px;font-weight:bold;color:#000;">Ok</div>
<div class="a" style="left:593px;top:240px;width:72px;height:26px;border:1px solid #6c6462"></div>
<div class="a" style="left:594px;top:241px;width:72px;height:26px;border:1px solid #fff"></div>
<div class="a t" style="left:593px;width:73px;text-align:center;top:248px;font-size:12px;line-height:12px;font-weight:bold;color:#000;">Cancel</div>
<div class="a" style="left:671px;top:240px;width:58px;height:26px;border:1px solid #6c6462"></div>
<div class="a" style="left:672px;top:241px;width:58px;height:26px;border:1px solid #fff"></div>
<div class="a t" style="left:671px;width:59px;text-align:center;top:248px;font-size:12px;line-height:12px;font-weight:bold;color:#000;">Help</div>
<div class="a" style="left:740px;top:0px;width:211px;height:275px;background:#cecece;box-shadow:inset 1px 1px #e4e4e4,inset -1px -1px #4c5446,inset 2px 2px #fff,inset -2px -2px #808080"></div>
<div class="a" style="left:744px;top:4px;width:203px;height:18px;background:linear-gradient(to right,#848484 0px,#848484 36px,#8a8a8a 36px,#8a8a8a 54px,#909090 54px,#909090 71px,#979797 71px,#979797 88px,#9d9d9d 88px,#9d9d9d 106px,#a3a3a3 106px,#a3a3a3 124px,#a9a9a9 124px,#a9a9a9 141px,#afafaf 141px,#afafaf 158px,#b6b6b6 158px,#b6b6b6 176px,#bcbcbc 176px,#bcbcbc 194px,#c2c2c2 194px,#c2c2c2 203px)"></div>
<svg class="a" style="left:746px;top:5px" width="16" height="16" viewBox="0 0 16 16" shape-rendering="crispEdges"><path d="M10.5 1.5 L4.5 8.5 Q 5 12.5, 12 13" stroke="#301008" stroke-width="5" fill="none" stroke-linecap="round" shape-rendering="geometricPrecision"/><path d="M10.5 1.5 L4.5 8.5 Q 5 12.5, 12 13" stroke="#f02808" stroke-width="3.6" fill="none" stroke-linecap="round" shape-rendering="geometricPrecision"/><path d="M9.5 3.5 L5.5 8.5 Q 6 11.5, 11 12.2" stroke="#ff6010" stroke-width="1" fill="none" shape-rendering="geometricPrecision"/><rect x="3" y="5" width="1" height="1" fill="#fff"/><rect x="2" y="11" width="1" height="1" fill="#fff"/><rect x="3" y="14" width="1" height="1" fill="#fff"/><rect x="10" y="15" width="1" height="1" fill="#fff"/><rect x="14" y="11" width="1" height="1" fill="#fff"/><rect x="14" y="14" width="1" height="1" fill="#fff"/><rect x="12" y="9" width="2" height="1" fill="#fff"/><rect x="12" y="2" width="1" height="1" fill="#fff"/></svg>
<div class="a t" style="left:764px;top:8px;font-size:11px;line-height:11px;font-weight:bold;color:#d4d4d4;letter-spacing:0.26px">Worm List Editor</div>
<div class="a" style="left:929px;top:6px;width:16px;height:14px;background:#cecece;box-shadow:inset -1px -1px #4c5446,inset 1px 1px #fff,inset -2px -2px #808080"></div>
<svg class="a" style="left:933px;top:9px" width="8" height="7" viewBox="0 0 8 7" shape-rendering="crispEdges"><path d="M0 0h2v1h1v1h2v-1h1v-1h2v1h-1v1h-1v1h-1v1h1v1h1v1h1v1h-2v-1h-1v-1h-2v1h-1v1h-2v-1h1v-1h1v-1h1v-1h-1v-1h-1v-1h-1z" fill="#000"/></svg>
<div class="a" style="left:911px;top:6px;width:16px;height:14px;background:#cecece;box-shadow:inset -1px -1px #4c5446,inset 1px 1px #fff,inset -2px -2px #808080"></div>
<div class="a" style="left:914px;top:8px;width:9px;height:9px;border:1px solid #000;border-top-width:2px"></div>
<div class="a" style="left:895px;top:6px;width:16px;height:14px;background:#cecece;box-shadow:inset -1px -1px #4c5446,inset 1px 1px #fff,inset -2px -2px #808080"></div>
<div class="a" style="left:899px;top:15px;width:6px;height:2px;background:#000"></div>
<div class="a" style="left:746px;top:25px;width:23px;height:23px;border:1px solid #6c6462"></div>
<div class="a" style="left:747px;top:26px;width:23px;height:23px;border:1px solid #fff"></div>
<svg class="a" style="left:746px;top:25px" width="24" height="24" viewBox="0 0 24 24" shape-rendering="crispEdges"><rect x="8" y="9" width="5" height="1" fill="#000"/><rect x="13" y="8" width="5" height="1" fill="#703020"/><rect x="17" y="9" width="1" height="8" fill="#000"/><rect x="8" y="10" width="9" height="1" fill="#fff"/><rect x="14" y="9" width="3" height="1" fill="#f0d8b8"/><rect x="5" y="11" width="11" height="1" fill="#000"/><rect x="6" y="12" width="10" height="1" fill="#fff"/><rect x="15" y="10" width="2" height="5" fill="#f0d0a8"/><rect x="5" y="12" width="1" height="1" fill="#000"/><rect x="6" y="13" width="1" height="3" fill="#000"/><rect x="7" y="16" width="11" height="1" fill="#000"/><rect x="7" y="13" width="9" height="3" fill="#f0d8b8"/><rect x="8" y="14" width="7" height="1" fill="#c8a888"/></svg>
<div class="a" style="left:770px;top:25px;width:23px;height:23px;border:1px solid #6c6462"></div>
<div class="a" style="left:771px;top:26px;width:23px;height:23px;border:1px solid #fff"></div>
<svg class="a" style="left:770px;top:25px" width="24" height="24" viewBox="0 0 24 24" shape-rendering="crispEdges"><rect x="7" y="6" width="10" height="1" fill="#000"/><rect x="7" y="17" width="10" height="1" fill="#000"/><rect x="6" y="7" width="1" height="10" fill="#000"/><rect x="17" y="7" width="1" height="10" fill="#000"/><rect x="7" y="7" width="10" height="10" fill="#fff"/><rect x="8" y="7" width="1" height="4" fill="#806860"/><rect x="9" y="7" width="2" height="4" fill="#d0d0d0"/><rect x="12" y="7" width="3" height="4" fill="#000"/><rect x="13" y="8" width="1" height="2" fill="#fff"/><rect x="8" y="12" width="8" height="1" fill="#806860"/><rect x="8" y="12" width="1" height="5" fill="#806860"/><rect x="15" y="12" width="1" height="5" fill="#806860"/><rect x="10" y="14" width="4" height="2" fill="#c8c8c8"/><rect x="8" y="18" width="9" height="1" fill="#fff"/><rect x="18" y="8" width="1" height="9" fill="#fff"/></svg>
<div class="a" style="left:794px;top:25px;width:23px;height:23px;border:1px solid #6c6462"></div>
<div class="a" style="left:795px;top:26px;width:23px;height:23px;border:1px solid #fff"></div>
<svg class="a" style="left:794px;top:25px" width="24" height="24" viewBox="0 0 24 24" shape-rendering="crispEdges"><rect x="6" y="5" width="9" height="1" fill="#000"/><rect x="5" y="6" width="1" height="9" fill="#000"/><rect x="15" y="6" width="1" height="6" fill="#000"/><rect x="6" y="15" width="3" height="1" fill="#000"/><rect x="6" y="6" width="9" height="9" fill="#fff"/><rect x="7" y="6" width="1" height="3" fill="#806860"/><rect x="8" y="6" width="1" height="3" fill="#d0d0d0"/><rect x="10" y="6" width="3" height="3" fill="#000"/><rect x="11" y="7" width="1" height="1" fill="#fff"/><rect x="7" y="10" width="2" height="1" fill="#806860"/><rect x="9" y="11" width="10" height="1" fill="#000"/><rect x="9" y="12" width="1" height="6" fill="#000"/><rect x="18" y="12" width="1" height="6" fill="#000"/><rect x="9" y="18" width="10" height="1" fill="#000"/><rect x="10" y="12" width="8" height="1" fill="#3040a0"/><rect x="10" y="13" width="8" height="5" fill="#fff"/><rect x="11" y="14" width="1" height="3" fill="#000"/><rect x="13" y="15" width="4" height="1" fill="#c0c0c0"/><rect x="10" y="19" width="9" height="1" fill="#fff"/><rect x="19" y="12" width="1" height="7" fill="#fff"/></svg>
<div class="a" style="left:828px;top:25px;width:23px;height:23px;border:1px solid #6c6462"></div>
<div class="a" style="left:829px;top:26px;width:23px;height:23px;border:1px solid #fff"></div>
<svg class="a" style="left:828px;top:25px" width="24" height="24" viewBox="0 0 24 24" shape-rendering="crispEdges"><rect x="7" y="5" width="8" height="1" fill="#000"/><rect x="7" y="5" width="1" height="12" fill="#000"/><rect x="7" y="16" width="10" height="1" fill="#000"/><rect x="16" y="8" width="1" height="9" fill="#000"/><rect x="15" y="6" width="1" height="1" fill="#000"/><rect x="16" y="7" width="1" height="1" fill="#000"/><rect x="8" y="6" width="7" height="10" fill="#fff"/><rect x="9" y="7" width="6" height="9" fill="#c8c8f0"/><rect x="15" y="8" width="1" height="8" fill="#c8c8f0"/><rect x="13" y="12" width="6" height="6" fill="#fff"/><rect x="16" y="13" width="1" height="5" fill="#000"/><rect x="14" y="15" width="5" height="1" fill="#000"/><rect x="14" y="13" width="2" height="2" fill="#c8c8f0"/></svg>
<div class="a" style="left:852px;top:25px;width:23px;height:23px;border:1px solid #6c6462"></div>
<div class="a" style="left:853px;top:26px;width:23px;height:23px;border:1px solid #fff"></div>
<svg class="a" style="left:852px;top:25px" width="24" height="24" viewBox="0 0 24 24" shape-rendering="crispEdges"><rect x="5" y="3" width="5" height="1" fill="#000"/><rect x="5" y="3" width="1" height="10" fill="#000"/><rect x="5" y="12" width="7" height="1" fill="#000"/><rect x="11" y="6" width="1" height="7" fill="#000"/><rect x="10" y="4" width="1" height="1" fill="#000"/><rect x="11" y="5" width="1" height="1" fill="#000"/><rect x="6" y="4" width="4" height="8" fill="#fff"/><rect x="7" y="5" width="3" height="7" fill="#c8c8f0"/><rect x="10" y="6" width="1" height="6" fill="#c8c8f0"/><rect x="7" y="5" width="5" height="1" fill="#000"/><rect x="7" y="5" width="1" height="10" fill="#000"/><rect x="7" y="14" width="7" height="1" fill="#000"/><rect x="13" y="8" width="1" height="7" fill="#000"/><rect x="12" y="6" width="1" height="1" fill="#000"/><rect x="13" y="7" width="1" height="1" fill="#000"/><rect x="8" y="6" width="4" height="8" fill="#fff"/><rect x="9" y="7" width="3" height="7" fill="#c8c8f0"/><rect x="12" y="8" width="1" height="6" fill="#c8c8f0"/><rect x="9" y="7" width="6" height="1" fill="#000"/><rect x="9" y="7" width="1" height="10" fill="#000"/><rect x="9" y="16" width="8" height="1" fill="#000"/><rect x="16" y="10" width="1" height="7" fill="#000"/><rect x="15" y="8" width="1" height="1" fill="#000"/><rect x="16" y="9" width="1" height="1" fill="#000"/><rect x="10" y="8" width="5" height="8" fill="#fff"/><rect x="11" y="9" width="4" height="7" fill="#c8c8f0"/><rect x="15" y="10" width="1" height="6" fill="#c8c8f0"/><rect x="14" y="12" width="5" height="6" fill="#fff"/><rect x="16" y="13" width="1" height="5" fill="#000"/><rect x="14" y="15" width="5" height="1" fill="#000"/></svg>
<div class="a" style="left:876px;top:25px;width:23px;height:23px;border:1px solid #6c6462"></div>
<div class="a" style="left:877px;top:26px;width:23px;height:23px;border:1px solid #fff"></div>
<svg class="a" style="left:876px;top:25px" width="24" height="24" viewBox="0 0 24 24" shape-rendering="crispEdges"><rect x="5" y="4" width="8" height="1" fill="#000"/><rect x="5" y="4" width="1" height="12" fill="#000"/><rect x="5" y="15" width="7" height="1" fill="#000"/><rect x="12" y="4" width="1" height="4" fill="#000"/><rect x="6" y="5" width="6" height="10" fill="#fff"/><rect x="7" y="6" width="5" height="9" fill="#b8b8e8"/><path d="M17.5 5 L10.5 17.5" stroke="#000" stroke-width="3.2" shape-rendering="geometricPrecision"/><path d="M17.5 5 L10.5 17.5" stroke="#e8e020" stroke-width="1.6" stroke-dasharray="1.5 1" shape-rendering="geometricPrecision"/><path d="M17.8 4.3 L16.6 6.5" stroke="#f08080" stroke-width="2" shape-rendering="geometricPrecision"/></svg>
<div class="a" style="left:900px;top:25px;width:23px;height:23px;border:1px solid #6c6462"></div>
<div class="a" style="left:901px;top:26px;width:23px;height:23px;border:1px solid #fff"></div>
<svg class="a" style="left:900px;top:25px" width="24" height="24" viewBox="0 0 24 24" shape-rendering="crispEdges"><rect x="9" y="4" width="5" height="1" fill="#663333"/><rect x="6" y="5" width="11" height="2" fill="#663333"/><rect x="7" y="7" width="9" height="1" fill="#663333"/><rect x="7" y="8" width="1" height="9" fill="#663333"/><rect x="15" y="8" width="1" height="9" fill="#663333"/><rect x="7" y="17" width="9" height="1" fill="#663333"/><rect x="8" y="8" width="7" height="9" fill="#b8b0b0"/><rect x="9" y="9" width="1" height="7" fill="#806060"/><rect x="11" y="9" width="1" height="7" fill="#806060"/><rect x="13" y="9" width="1" height="7" fill="#806060"/></svg>
<div class="a" style="left:746px;top:59px;width:198px;height:172px;border:1px solid #8c8c8c"></div>
<div class="a" style="left:747px;top:60px;width:198px;height:172px;border:1px solid #fff"></div>
<div class="a" style="left:753px;top:59px;width:64px;height:2px;background:#cecece"></div>
<div class="a t" style="left:756px;top:55px;font-size:12px;line-height:12px;font-weight:normal;color:#000;">Worm List</div>
<div class="a" style="left:750px;top:73px;width:191px;height:155px;background:#fff"></div>
<div class="a" style="left:750px;top:73px;width:190px;height:154px;border:1px solid #6c6462"></div>
<div class="a" style="left:751px;top:74px;width:190px;height:154px;border:1px solid #fff"></div>
<svg class="a" style="left:752px;top:75px" width="16" height="16" viewBox="0 0 16 16" shape-rendering="crispEdges"><rect x="0.5" y="0.5" width="15" height="15" rx="3" fill="#a86054" stroke="#000" shape-rendering="geometricPrecision"/></svg>
<div class="a t" style="left:773px;top:78px;font-size:12px;line-height:12px;font-weight:normal;color:#000;">Name:&nbsp; [4984321]</div>
<svg class="a" style="left:752px;top:94px" width="16" height="16" viewBox="0 0 16 16" shape-rendering="crispEdges"><rect x="0.5" y="0.5" width="15" height="15" rx="3" fill="#404068" stroke="#000" shape-rendering="geometricPrecision"/></svg>
<div class="a t" style="left:773px;top:97px;font-size:12px;line-height:12px;font-weight:normal;color:#000;">Name:&nbsp; [2847077]</div>
<svg class="a" style="left:752px;top:113px" width="16" height="16" viewBox="0 0 16 16" shape-rendering="crispEdges"><rect x="0.5" y="0.5" width="15" height="15" rx="3" fill="#a040e0" stroke="#000" shape-rendering="geometricPrecision"/></svg>
<div class="a t" style="left:773px;top:116px;font-size:12px;line-height:12px;font-weight:normal;color:#000;">Name:&nbsp; [2212911]</div>
<svg class="a" style="left:752px;top:132px" width="16" height="16" viewBox="0 0 16 16" shape-rendering="crispEdges"><rect x="0.5" y="0.5" width="15" height="15" rx="3" fill="#f0e070" stroke="#000" shape-rendering="geometricPrecision"/></svg>
<div class="a t" style="left:773px;top:135px;font-size:12px;line-height:12px;font-weight:normal;color:#000;">Name:&nbsp; [5704005]</div>
<div class="a" style="left:752px;top:150px;width:172px;height:19px;background:#ccccff"></div>
<svg class="a" style="left:752px;top:151px" width="16" height="16" viewBox="0 0 16 16" shape-rendering="crispEdges"><rect x="0.5" y="0.5" width="15" height="15" rx="3" fill="#e8b040" stroke="#000" shape-rendering="geometricPrecision"/></svg>
<div class="a t" style="left:773px;top:154px;font-size:12px;line-height:12px;font-weight:normal;color:#000;">Name:&nbsp; [2209178]</div>
<svg class="a" style="left:752px;top:170px" width="16" height="16" viewBox="0 0 16 16" shape-rendering="crispEdges"><rect x="0.5" y="0.5" width="15" height="15" rx="3" fill="#20b8b8" stroke="#000" shape-rendering="geometricPrecision"/></svg>
<div class="a t" style="left:773px;top:173px;font-size:12px;line-height:12px;font-weight:normal;color:#000;">Name:&nbsp; [1680250]</div>
<svg class="a" style="left:752px;top:189px" width="16" height="16" viewBox="0 0 16 16" shape-rendering="crispEdges"><rect x="0.5" y="0.5" width="15" height="15" rx="3" fill="#5040a8" stroke="#000" shape-rendering="geometricPrecision"/></svg>
<div class="a t" style="left:773px;top:192px;font-size:12px;line-height:12px;font-weight:normal;color:#000;">Name:&nbsp; [3923254]</div>
<svg class="a" style="left:752px;top:208px" width="16" height="16" viewBox="0 0 16 16" shape-rendering="crispEdges"><rect x="0.5" y="0.5" width="15" height="15" rx="3" fill="#c87088" stroke="#000" shape-rendering="geometricPrecision"/></svg>
<div class="a t" style="left:773px;top:211px;font-size:12px;line-height:12px;font-weight:normal;color:#000;">Name:&nbsp; [3676512]</div>
<div class="a" style="left:924px;top:74px;width:15px;height:153px;background:#cecece;border-left:1px solid #6c6462"></div>
<div class="a" style="left:925px;top:75px;width:14px;height:1px;background:#fff"></div>
<div class="a" style="left:925px;top:75px;width:1px;height:13px;background:#fff"></div>
<svg class="a" style="left:928px;top:79px" width="8" height="4" viewBox="0 0 8 4" shape-rendering="crispEdges"><path d="M4 0 L8 4 L0 4 Z" fill="#000"/></svg>
<div class="a" style="left:925px;top:211px;width:14px;height:1px;background:#6c6462"></div>
<div class="a" style="left:925px;top:212px;width:14px;height:1px;background:#fff"></div>
<div class="a" style="left:925px;top:212px;width:1px;height:15px;background:#fff"></div>
<svg class="a" style="left:928px;top:217px" width="8" height="4" viewBox="0 0 8 4" shape-rendering="crispEdges"><path d="M0 0 L8 0 L4 4 Z" fill="#000"/></svg>
<div class="a" style="left:924px;top:89px;width:15px;height:19px;background:#9999cc;border:1px solid #000;border-right:none;box-shadow:inset 1px 1px #ccccff"></div>
<svg class="a" style="left:924px;top:89px" width="15" height="19" viewBox="0 0 15 19" shape-rendering="crispEdges"><rect x="3" y="3" width="1" height="1" fill="#000"/><rect x="7" y="3" width="1" height="1" fill="#000"/><rect x="11" y="3" width="1" height="1" fill="#000"/><rect x="5" y="5" width="1" height="1" fill="#000"/><rect x="9" y="5" width="1" height="1" fill="#000"/><rect x="3" y="7" width="1" height="1" fill="#000"/><rect x="7" y="7" width="1" height="1" fill="#000"/><rect x="11" y="7" width="1" height="1" fill="#000"/><rect x="5" y="9" width="1" height="1" fill="#000"/><rect x="9" y="9" width="1" height="1" fill="#000"/><rect x="3" y="11" width="1" height="1" fill="#000"/><rect x="7" y="11" width="1" height="1" fill="#000"/><rect x="11" y="11" width="1" height="1" fill="#000"/><rect x="5" y="13" width="1" height="1" fill="#000"/><rect x="9" y="13" width="1" height="1" fill="#000"/><rect x="3" y="15" width="1" height="1" fill="#000"/><rect x="7" y="15" width="1" height="1" fill="#000"/><rect x="11" y="15" width="1" height="1" fill="#000"/></svg>
<div class="a" style="left:749px;top:239px;width:50px;height:26px;border:1px solid #6c6462"></div>
<div class="a" style="left:750px;top:240px;width:50px;height:26px;border:1px solid #fff"></div>
<div class="a t" style="left:749px;width:51px;text-align:center;top:247px;font-size:12px;line-height:12px;font-weight:bold;color:#000;">Ok</div>
<div class="a" style="left:805px;top:239px;width:72px;height:26px;border:1px solid #6c6462"></div>
<div class="a" style="left:806px;top:240px;width:72px;height:26px;border:1px solid #fff"></div>
<div class="a t" style="left:805px;width:73px;text-align:center;top:247px;font-size:12px;line-height:12px;font-weight:bold;color:#000;">Cancel</div>
<div class="a" style="left:883px;top:239px;width:58px;height:26px;border:1px solid #6c6462"></div>
<div class="a" style="left:884px;top:240px;width:58px;height:26px;border:1px solid #fff"></div>
<div class="a t" style="left:883px;width:59px;text-align:center;top:247px;font-size:12px;line-height:12px;font-weight:bold;color:#000;">Help</div>
<div class="a" style="left:529px;top:278px;width:416px;height:274px;background:#cecece;box-shadow:inset 1px 1px #e4e4e4,inset -1px -1px #4c5446,inset 2px 2px #fff,inset -2px -2px #808080"></div>
<div class="a" style="left:533px;top:282px;width:408px;height:18px;background:linear-gradient(to right,#0a246a 0px,#0a246a 28px,#122a70 28px,#122a70 64px,#1a3078 64px,#1a3078 83px,#243c80 83px,#243c80 112px,#2a5688 112px,#2a5688 118px,#385898 118px,#385898 164px,#5a6a92 164px,#5a6a92 171px,#5868a8 171px,#5868a8 198px,#5e70aa 198px,#5e70aa 229px,#6a88b8 229px,#6a88b8 262px,#7098c8 262px,#7098c8 284px,#78a0c8 284px,#78a0c8 303px,#80a8d0 303px,#80a8d0 317px,#88b0d8 317px,#88b0d8 327px,#90b8e0 327px,#90b8e0 353px,#98c0e8 353px,#98c0e8 378px,#a0c8f0 378px,#a0c8f0 407px)"></div>
<svg class="a" style="left:535px;top:283px" width="16" height="16" viewBox="0 0 16 16" shape-rendering="crispEdges"><path d="M10.5 1.5 L4.5 8.5 Q 5 12.5, 12 13" stroke="#301008" stroke-width="5" fill="none" stroke-linecap="round" shape-rendering="geometricPrecision"/><path d="M10.5 1.5 L4.5 8.5 Q 5 12.5, 12 13" stroke="#f02808" stroke-width="3.6" fill="none" stroke-linecap="round" shape-rendering="geometricPrecision"/><path d="M9.5 3.5 L5.5 8.5 Q 6 11.5, 11 12.2" stroke="#ff6010" stroke-width="1" fill="none" shape-rendering="geometricPrecision"/><rect x="3" y="5" width="1" height="1" fill="#fff"/><rect x="2" y="11" width="1" height="1" fill="#fff"/><rect x="3" y="14" width="1" height="1" fill="#fff"/><rect x="10" y="15" width="1" height="1" fill="#fff"/><rect x="14" y="11" width="1" height="1" fill="#fff"/><rect x="14" y="14" width="1" height="1" fill="#fff"/><rect x="12" y="9" width="2" height="1" fill="#fff"/><rect x="12" y="2" width="1" height="1" fill="#fff"/></svg>
<div class="a t" style="left:553px;top:286px;font-size:11px;line-height:11px;font-weight:bold;color:#fff;letter-spacing:0.38px">Worm Editor</div>
<div class="a" style="left:923px;top:284px;width:16px;height:14px;background:#cecece;box-shadow:inset -1px -1px #4c5446,inset 1px 1px #fff,inset -2px -2px #808080"></div>
<svg class="a" style="left:927px;top:287px" width="8" height="7" viewBox="0 0 8 7" shape-rendering="crispEdges"><path d="M0 0h2v1h1v1h2v-1h1v-1h2v1h-1v1h-1v1h-1v1h1v1h1v1h1v1h-2v-1h-1v-1h-2v1h-1v1h-2v-1h1v-1h1v-1h1v-1h-1v-1h-1v-1h-1z" fill="#000"/></svg>
<div class="a" style="left:535px;top:309px;width:211px;height:199px;border:1px solid #8c8c8c"></div>
<div class="a" style="left:536px;top:310px;width:211px;height:199px;border:1px solid #fff"></div>
<div class="a" style="left:542px;top:309px;width:49px;height:2px;background:#cecece"></div>
<div class="a t" style="left:545px;top:305px;font-size:12px;line-height:12px;font-weight:normal;color:#000;">A Worm</div>
<div class="a" style="left:751px;top:309px;width:187px;height:199px;border:1px solid #8c8c8c"></div>
<div class="a" style="left:752px;top:310px;width:187px;height:199px;border:1px solid #fff"></div>
<div class="a" style="left:758px;top:309px;width:34px;height:2px;background:#cecece"></div>
<div class="a t" style="left:761px;top:305px;font-size:12px;line-height:12px;font-weight:normal;color:#000;">DNA</div>
<div class="a t" style="left:539px;top:331px;font-size:12px;line-height:12px;font-weight:bold;color:#000;">Name:</div>
<div class="a" style="left:641px;top:323px;width:102px;height:26px;background:#fff"></div>
<div class="a" style="left:641px;top:323px;width:101px;height:25px;border:1px solid #6c6462"></div>
<div class="a" style="left:642px;top:324px;width:101px;height:25px;border:1px solid #fff"></div>
<div class="a t" style="left:644px;top:330px;font-size:12px;line-height:12px;font-weight:normal;color:#000;">2209178</div>
<div class="a t" style="left:539px;top:357px;font-size:12px;line-height:12px;font-weight:bold;color:#000;">Age:</div>
<div class="a" style="left:641px;top:349px;width:102px;height:26px;background:#fff"></div>
<div class="a" style="left:641px;top:349px;width:101px;height:25px;border:1px solid #6c6462"></div>
<div class="a" style="left:642px;top:350px;width:101px;height:25px;border:1px solid #fff"></div>
<div class="a t" style="left:644px;top:356px;font-size:12px;line-height:12px;font-weight:normal;color:#000;">0</div>
<div class="a t" style="left:539px;top:383px;font-size:12px;line-height:12px;font-weight:bold;color:#000;">Life:</div>
<div class="a" style="left:641px;top:375px;width:102px;height:26px;background:#fff"></div>
<div class="a" style="left:641px;top:375px;width:101px;height:25px;border:1px solid #6c6462"></div>
<div class="a" style="left:642px;top:376px;width:101px;height:25px;border:1px solid #fff"></div>
<div class="a t" style="left:644px;top:382px;font-size:12px;line-height:12px;font-weight:normal;color:#000;">150.0</div>
<div class="a t" style="left:539px;top:409px;font-size:12px;line-height:12px;font-weight:bold;color:#000;">Size:</div>
<div class="a" style="left:641px;top:401px;width:102px;height:26px;background:#fff"></div>
<div class="a" style="left:641px;top:401px;width:101px;height:25px;border:1px solid #6c6462"></div>
<div class="a" style="left:642px;top:402px;width:101px;height:25px;border:1px solid #fff"></div>
<div class="a t" style="left:644px;top:408px;font-size:12px;line-height:12px;font-weight:normal;color:#000;">3</div>
<div class="a t" style="left:539px;top:435px;font-size:12px;line-height:12px;font-weight:bold;color:#000;">Color:</div>
<div class="a" style="left:641px;top:427px;width:102px;height:26px;background:#fff"></div>
<div class="a" style="left:641px;top:427px;width:101px;height:25px;border:1px solid #6c6462"></div>
<div class="a" style="left:642px;top:428px;width:101px;height:25px;border:1px solid #fff"></div>
<div class="a" style="left:643px;top:429px;width:98px;height:22px;background:#e8b040"></div>
<div class="a t" style="left:539px;top:461px;font-size:12px;line-height:12px;font-weight:bold;color:#000;">Halo Type:</div>
<div class="a" style="left:641px;top:453px;width:102px;height:26px;background:#cecece"></div>
<div class="a" style="left:641px;top:453px;width:101px;height:25px;border:1px solid #6c6462"></div>
<div class="a" style="left:642px;top:454px;width:101px;height:25px;border:1px solid #fff"></div>
<div class="a t" style="left:646px;top:460px;font-size:12px;line-height:12px;font-weight:bold;color:#000;">Stare</div>
<svg class="a" style="left:726px;top:463px" width="10" height="5" viewBox="0 0 10 5" shape-rendering="crispEdges"><path d="M0 0 L10 0 L5 5 Z" fill="#000"/></svg>
<div class="a t" style="left:539px;top:487px;font-size:12px;line-height:12px;font-weight:bold;color:#000;">Halo Size:</div>
<div class="a" style="left:641px;top:479px;width:102px;height:26px;background:#fff"></div>
<div class="a" style="left:641px;top:479px;width:101px;height:25px;border:1px solid #6c6462"></div>
<div class="a" style="left:642px;top:480px;width:101px;height:25px;border:1px solid #fff"></div>
<div class="a t" style="left:644px;top:486px;font-size:12px;line-height:12px;font-weight:normal;color:#000;">6</div>
<div class="a" style="left:755px;top:323px;width:179px;height:180px;border:1px solid #6c6462"></div>
<div class="a" style="left:756px;top:324px;width:179px;height:180px;border:1px solid #fff"></div>
<svg class="a" style="left:755px;top:324px;overflow:hidden" width="164" height="179" shape-rendering="geometricPrecision"><g transform="translate(1,0)"><rect x="0.5" y="0.5" width="15" height="15" rx="3" fill="#00ffff" stroke="#000"/><text x="8" y="12.5" font-family="Liberation Sans" font-size="11" font-style="italic" text-anchor="middle" fill="#fff" stroke="#000" stroke-width="1.6" paint-order="stroke" transform="translate(8 0) scale(0.9 1) translate(-8 0)">A</text></g><g transform="translate(19,0)"><rect x="0.5" y="0.5" width="15" height="15" rx="3" fill="#ff0000" stroke="#000"/><text x="8" y="12.5" font-family="Liberation Sans" font-size="11" font-style="italic" text-anchor="middle" fill="#fff" stroke="#000" stroke-width="1.6" paint-order="stroke" transform="translate(8 0) scale(0.9 1) translate(-8 0)">D</text></g><g transform="translate(37,0)"><rect x="0.5" y="0.5" width="15" height="15" rx="3" fill="#00ffff" stroke="#000"/><text x="8" y="12.5" font-family="Liberation Sans" font-size="11" font-style="italic" text-anchor="middle" fill="#fff" stroke="#000" stroke-width="1.6" paint-order="stroke" transform="translate(8 0) scale(0.9 1) translate(-8 0)">A</text></g><g transform="translate(82,0)"><rect x="0" y="0" width="81" height="17" fill="#cecece"/><rect x="0.5" y="0.5" width="80" height="15" fill="none" stroke="#6c6462"/><rect x="1.5" y="1.5" width="80" height="15" fill="none" stroke="#fff"/><path d="M64 5 L74 5 L69 10 Z" fill="#000"/><g transform="translate(6.0,4) scale(0.875)"><path d="M0 4 L4 0 L4 3 L8 3 L8 5 L4 5 L4 8 Z" fill="#000"/></g><g transform="translate(15.5,4) scale(0.875)"><path d="M4 0 L8 4 L5 4 L5 9 L3 9 L3 4 L0 4 Z" fill="#000"/></g><g transform="translate(25.0,4) scale(0.875)"><path d="M8 4 L4 0 L4 3 L0 3 L0 5 L4 5 L4 8 Z" fill="#000"/></g></g><g transform="translate(1,17)"><rect x="0.5" y="0.5" width="15" height="15" rx="3" fill="#ff0000" stroke="#000"/><text x="8" y="12.5" font-family="Liberation Sans" font-size="11" font-style="italic" text-anchor="middle" fill="#fff" stroke="#000" stroke-width="1.6" paint-order="stroke" transform="translate(8 0) scale(0.9 1) translate(-8 0)">D</text></g><g transform="translate(19,17)"><rect x="0.5" y="0.5" width="15" height="15" rx="3" fill="#00ffff" stroke="#000"/><text x="8" y="12.5" font-family="Liberation Sans" font-size="11" font-style="italic" text-anchor="middle" fill="#fff" stroke="#000" stroke-width="1.6" paint-order="stroke" transform="translate(8 0) scale(0.9 1) translate(-8 0)">A</text></g><g transform="translate(37,17)"><rect x="0.5" y="0.5" width="15" height="15" rx="3" fill="#ffffff" stroke="#000"/><text x="8" y="12.5" font-family="Liberation Sans" font-size="11" font-style="italic" text-anchor="middle" fill="#000">I</text></g><g transform="translate(82,17)"><rect x="0" y="0" width="81" height="17" fill="#cecece"/><rect x="0.5" y="0.5" width="80" height="15" fill="none" stroke="#6c6462"/><rect x="1.5" y="1.5" width="80" height="15" fill="none" stroke="#fff"/><path d="M64 5 L74 5 L69 10 Z" fill="#000"/><g transform="translate(6.0,4) scale(0.875)"><path d="M8 4 L4 0 L4 3 L0 3 L0 5 L4 5 L4 8 Z" fill="#000"/></g><g transform="translate(15.5,4) scale(0.875)"><path d="M0 4 L4 0 L4 3 L8 3 L8 5 L4 5 L4 8 Z" fill="#000"/></g><g transform="translate(25.0,4) scale(0.875)"><path d="M4 0 L8 4 L5 4 L5 9 L3 9 L3 4 L0 4 Z" fill="#000"/></g></g><g transform="translate(1,34)"><rect x="0.5" y="0.5" width="15" height="15" rx="3" fill="#ff0000" stroke="#000"/><text x="8" y="12.5" font-family="Liberation Sans" font-size="11" font-style="italic" text-anchor="middle" fill="#fff" stroke="#000" stroke-width="1.6" paint-order="stroke" transform="translate(8 0) scale(0.9 1) translate(-8 0)">D</text></g><g transform="translate(19,34)"><rect x="0.5" y="0.5" width="15" height="15" rx="3" fill="#00ffff" stroke="#000"/><text x="8" y="12.5" font-family="Liberation Sans" font-size="11" font-style="italic" text-anchor="middle" fill="#fff" stroke="#000" stroke-width="1.6" paint-order="stroke" transform="translate(8 0) scale(0.9 1) translate(-8 0)">A</text></g><g transform="translate(37,34)"><rect x="0.5" y="0.5" width="15" height="15" rx="3" fill="#ff0000" stroke="#000"/><text x="8" y="12.5" font-family="Liberation Sans" font-size="11" font-style="italic" text-anchor="middle" fill="#fff" stroke="#000" stroke-width="1.6" paint-order="stroke" transform="translate(8 0) scale(0.9 1) translate(-8 0)">D</text></g><g transform="translate(82,34)"><rect x="0" y="0" width="81" height="17" fill="#cecece"/><rect x="0.5" y="0.5" width="80" height="15" fill="none" stroke="#6c6462"/><rect x="1.5" y="1.5" width="80" height="15" fill="none" stroke="#fff"/><path d="M64 5 L74 5 L69 10 Z" fill="#000"/><g transform="translate(6.0,4) scale(0.875)"><path d="M8 4 L4 0 L4 3 L0 3 L0 5 L4 5 L4 8 Z" fill="#000"/></g><g transform="translate(15.5,4) scale(0.875)"><path d="M4 0 L8 4 L5 4 L5 9 L3 9 L3 4 L0 4 Z" fill="#000"/></g><g transform="translate(25.0,4) scale(0.875)"><path d="M0 4 L4 0 L4 3 L8 3 L8 5 L4 5 L4 8 Z" fill="#000"/></g></g><g transform="translate(1,51)"><rect x="0.5" y="0.5" width="15" height="15" rx="3" fill="#ff0000" stroke="#000"/><text x="8" y="12.5" font-family="Liberation Sans" font-size="11" font-style="italic" text-anchor="middle" fill="#fff" stroke="#000" stroke-width="1.6" paint-order="stroke" transform="translate(8 0) scale(0.9 1) translate(-8 0)">D</text></g><g transform="translate(19,51)"><rect x="0.5" y="0.5" width="15" height="15" rx="3" fill="#00ffff" stroke="#000"/><text x="8" y="12.5" font-family="Liberation Sans" font-size="11" font-style="italic" text-anchor="middle" fill="#fff" stroke="#000" stroke-width="1.6" paint-order="stroke" transform="translate(8 0) scale(0.9 1) translate(-8 0)">A</text></g><g transform="translate(37,51)"><rect x="0.5" y="0.5" width="15" height="15" rx="3" fill="#00ffff" stroke="#000"/><text x="8" y="12.5" font-family="Liberation Sans" font-size="11" font-style="italic" text-anchor="middle" fill="#fff" stroke="#000" stroke-width="1.6" paint-order="stroke" transform="translate(8 0) scale(0.9 1) translate(-8 0)">A</text></g><g transform="translate(82,51)"><rect x="0" y="0" width="81" height="17" fill="#cecece"/><rect x="0.5" y="0.5" width="80" height="15" fill="none" stroke="#6c6462"/><rect x="1.5" y="1.5" width="80" height="15" fill="none" stroke="#fff"/><path d="M64 5 L74 5 L69 10 Z" fill="#000"/><g transform="translate(6.0,4) scale(0.875)"><path d="M4 0 L8 4 L5 4 L5 9 L3 9 L3 4 L0 4 Z" fill="#000"/></g><g transform="translate(15.5,4) scale(0.875)"><path d="M0 4 L4 0 L4 3 L8 3 L8 5 L4 5 L4 8 Z" fill="#000"/></g><g transform="translate(25.0,4) scale(0.875)"><path d="M8 4 L4 0 L4 3 L0 3 L0 5 L4 5 L4 8 Z" fill="#000"/></g></g><g transform="translate(1,68)"><rect x="0.5" y="0.5" width="15" height="15" rx="3" fill="#ff0000" stroke="#000"/><text x="8" y="12.5" font-family="Liberation Sans" font-size="11" font-style="italic" text-anchor="middle" fill="#fff" stroke="#000" stroke-width="1.6" paint-order="stroke" transform="translate(8 0) scale(0.9 1) translate(-8 0)">D</text></g><g transform="translate(19,68)"><rect x="0.5" y="0.5" width="15" height="15" rx="3" fill="#ffffff" stroke="#000"/><text x="8" y="12.5" font-family="Liberation Sans" font-size="11" font-style="italic" text-anchor="middle" fill="#000">I</text></g><g transform="translate(37,68)"><rect x="0.5" y="0.5" width="15" height="15" rx="3" fill="#ffffff" stroke="#000"/><text x="8" y="12.5" font-family="Liberation Sans" font-size="11" font-style="italic" text-anchor="middle" fill="#000">I</text></g><g transform="translate(82,68)"><rect x="0" y="0" width="81" height="17" fill="#cecece"/><rect x="0.5" y="0.5" width="80" height="15" fill="none" stroke="#6c6462"/><rect x="1.5" y="1.5" width="80" height="15" fill="none" stroke="#fff"/><path d="M64 5 L74 5 L69 10 Z" fill="#000"/><g transform="translate(6.0,4) scale(0.875)"><path d="M0 4 L4 0 L4 3 L8 3 L8 5 L4 5 L4 8 Z" fill="#000"/></g><g transform="translate(15.5,4) scale(0.875)"><path d="M4 0 L8 4 L5 4 L5 9 L3 9 L3 4 L0 4 Z" fill="#000"/></g><g transform="translate(25.0,4) scale(0.875)"><path d="M8 4 L4 0 L4 3 L0 3 L0 5 L4 5 L4 8 Z" fill="#000"/></g></g><g transform="translate(1,85)"><rect x="0.5" y="0.5" width="15" height="15" rx="3" fill="#ff0000" stroke="#000"/><text x="8" y="12.5" font-family="Liberation Sans" font-size="11" font-style="italic" text-anchor="middle" fill="#fff" stroke="#000" stroke-width="1.6" paint-order="stroke" transform="translate(8 0) scale(0.9 1) translate(-8 0)">D</text></g><g transform="translate(19,85)"><rect x="0.5" y="0.5" width="15" height="15" rx="3" fill="#ffffff" stroke="#000"/><text x="8" y="12.5" font-family="Liberation Sans" font-size="11" font-style="italic" text-anchor="middle" fill="#000">I</text></g><g transform="translate(37,85)"><rect x="0.5" y="0.5" width="15" height="15" rx="3" fill="#ff0000" stroke="#000"/><text x="8" y="12.5" font-family="Liberation Sans" font-size="11" font-style="italic" text-anchor="middle" fill="#fff" stroke="#000" stroke-width="1.6" paint-order="stroke" transform="translate(8 0) scale(0.9 1) translate(-8 0)">D</text></g><g transform="translate(82,85)"><rect x="0" y="0" width="81" height="17" fill="#cecece"/><rect x="0.5" y="0.5" width="80" height="15" fill="none" stroke="#6c6462"/><rect x="1.5" y="1.5" width="80" height="15" fill="none" stroke="#fff"/><path d="M64 5 L74 5 L69 10 Z" fill="#000"/><g transform="translate(6.0,4) scale(0.875)"><path d="M4 0 L8 4 L5 4 L5 9 L3 9 L3 4 L0 4 Z" fill="#000"/></g><g transform="translate(15.5,4) scale(0.875)"><path d="M0 4 L4 0 L4 3 L8 3 L8 5 L4 5 L4 8 Z" fill="#000"/></g><g transform="translate(25.0,4) scale(0.875)"><path d="M8 4 L4 0 L4 3 L0 3 L0 5 L4 5 L4 8 Z" fill="#000"/></g></g><g transform="translate(1,102)"><rect x="0.5" y="0.5" width="15" height="15" rx="3" fill="#ff0000" stroke="#000"/><text x="8" y="12.5" font-family="Liberation Sans" font-size="11" font-style="italic" text-anchor="middle" fill="#fff" stroke="#000" stroke-width="1.6" paint-order="stroke" transform="translate(8 0) scale(0.9 1) translate(-8 0)">D</text></g><g transform="translate(19,102)"><rect x="0.5" y="0.5" width="15" height="15" rx="3" fill="#ffffff" stroke="#000"/><text x="8" y="12.5" font-family="Liberation Sans" font-size="11" font-style="italic" text-anchor="middle" fill="#000">I</text></g><g transform="translate(37,102)"><rect x="0.5" y="0.5" width="15" height="15" rx="3" fill="#00ffff" stroke="#000"/><text x="8" y="12.5" font-family="Liberation Sans" font-size="11" font-style="italic" text-anchor="middle" fill="#fff" stroke="#000" stroke-width="1.6" paint-order="stroke" transform="translate(8 0) scale(0.9 1) translate(-8 0)">A</text></g><g transform="translate(82,102)"><rect x="0" y="0" width="81" height="17" fill="#cecece"/><rect x="0.5" y="0.5" width="80" height="15" fill="none" stroke="#6c6462"/><rect x="1.5" y="1.5" width="80" height="15" fill="none" stroke="#fff"/><path d="M64 5 L74 5 L69 10 Z" fill="#000"/><g transform="translate(6.0,4) scale(0.875)"><path d="M8 4 L4 0 L4 3 L0 3 L0 5 L4 5 L4 8 Z" fill="#000"/></g><g transform="translate(15.5,4) scale(0.875)"><path d="M0 4 L4 0 L4 3 L8 3 L8 5 L4 5 L4 8 Z" fill="#000"/></g><g transform="translate(25.0,4) scale(0.875)"><path d="M4 0 L8 4 L5 4 L5 9 L3 9 L3 4 L0 4 Z" fill="#000"/></g></g><g transform="translate(1,119)"><rect x="0.5" y="0.5" width="15" height="15" rx="3" fill="#ff0000" stroke="#000"/><text x="8" y="12.5" font-family="Liberation Sans" font-size="11" font-style="italic" text-anchor="middle" fill="#fff" stroke="#000" stroke-width="1.6" paint-order="stroke" transform="translate(8 0) scale(0.9 1) translate(-8 0)">D</text></g><g transform="translate(19,119)"><rect x="0.5" y="0.5" width="15" height="15" rx="3" fill="#ff0000" stroke="#000"/><text x="8" y="12.5" font-family="Liberation Sans" font-size="11" font-style="italic" text-anchor="middle" fill="#fff" stroke="#000" stroke-width="1.6" paint-order="stroke" transform="translate(8 0) scale(0.9 1) translate(-8 0)">D</text></g><g transform="translate(37,119)"><rect x="0.5" y="0.5" width="15" height="15" rx="3" fill="#ffffff" stroke="#000"/><text x="8" y="12.5" font-family="Liberation Sans" font-size="11" font-style="italic" text-anchor="middle" fill="#000">I</text></g><g transform="translate(82,119)"><rect x="0" y="0" width="81" height="17" fill="#cecece"/><rect x="0.5" y="0.5" width="80" height="15" fill="none" stroke="#6c6462"/><rect x="1.5" y="1.5" width="80" height="15" fill="none" stroke="#fff"/><path d="M64 5 L74 5 L69 10 Z" fill="#000"/><g transform="translate(6.0,4) scale(0.875)"><path d="M8 4 L4 0 L4 3 L0 3 L0 5 L4 5 L4 8 Z" fill="#000"/></g><g transform="translate(15.5,4) scale(0.875)"><path d="M4 0 L8 4 L5 4 L5 9 L3 9 L3 4 L0 4 Z" fill="#000"/></g><g transform="translate(25.0,4) scale(0.875)"><path d="M0 4 L4 0 L4 3 L8 3 L8 5 L4 5 L4 8 Z" fill="#000"/></g></g><g transform="translate(1,136)"><rect x="0.5" y="0.5" width="15" height="15" rx="3" fill="#ff0000" stroke="#000"/><text x="8" y="12.5" font-family="Liberation Sans" font-size="11" font-style="italic" text-anchor="middle" fill="#fff" stroke="#000" stroke-width="1.6" paint-order="stroke" transform="translate(8 0) scale(0.9 1) translate(-8 0)">D</text></g><g transform="translate(19,136)"><rect x="0.5" y="0.5" width="15" height="15" rx="3" fill="#ff0000" stroke="#000"/><text x="8" y="12.5" font-family="Liberation Sans" font-size="11" font-style="italic" text-anchor="middle" fill="#fff" stroke="#000" stroke-width="1.6" paint-order="stroke" transform="translate(8 0) scale(0.9 1) translate(-8 0)">D</text></g><g transform="translate(37,136)"><rect x="0.5" y="0.5" width="15" height="15" rx="3" fill="#ff0000" stroke="#000"/><text x="8" y="12.5" font-family="Liberation Sans" font-size="11" font-style="italic" text-anchor="middle" fill="#fff" stroke="#000" stroke-width="1.6" paint-order="stroke" transform="translate(8 0) scale(0.9 1) translate(-8 0)">D</text></g><g transform="translate(82,136)"><rect x="0" y="0" width="81" height="17" fill="#cecece"/><rect x="0.5" y="0.5" width="80" height="15" fill="none" stroke="#6c6462"/><rect x="1.5" y="1.5" width="80" height="15" fill="none" stroke="#fff"/><path d="M64 5 L74 5 L69 10 Z" fill="#000"/><g transform="translate(6.0,4) scale(0.875)"><path d="M0 4 L4 0 L4 3 L8 3 L8 5 L4 5 L4 8 Z" fill="#000"/></g><g transform="translate(15.5,4) scale(0.875)"><path d="M4 0 L8 4 L5 4 L5 9 L3 9 L3 4 L0 4 Z" fill="#000"/></g><g transform="translate(25.0,4) scale(0.875)"><path d="M8 4 L4 0 L4 3 L0 3 L0 5 L4 5 L4 8 Z" fill="#000"/></g></g><g transform="translate(1,153)"><rect x="0.5" y="0.5" width="15" height="15" rx="3" fill="#ff0000" stroke="#000"/><text x="8" y="12.5" font-family="Liberation Sans" font-size="11" font-style="italic" text-anchor="middle" fill="#fff" stroke="#000" stroke-width="1.6" paint-order="stroke" transform="translate(8 0) scale(0.9 1) translate(-8 0)">D</text></g><g transform="translate(19,153)"><rect x="0.5" y="0.5" width="15" height="15" rx="3" fill="#ff0000" stroke="#000"/><text x="8" y="12.5" font-family="Liberation Sans" font-size="11" font-style="italic" text-anchor="middle" fill="#fff" stroke="#000" stroke-width="1.6" paint-order="stroke" transform="translate(8 0) scale(0.9 1) translate(-8 0)">D</text></g><g transform="translate(37,153)"><rect x="0.5" y="0.5" width="15" height="15" rx="3" fill="#00ffff" stroke="#000"/><text x="8" y="12.5" font-family="Liberation Sans" font-size="11" font-style="italic" text-anchor="middle" fill="#fff" stroke="#000" stroke-width="1.6" paint-order="stroke" transform="translate(8 0) scale(0.9 1) translate(-8 0)">A</text></g><g transform="translate(82,153)"><rect x="0" y="0" width="81" height="17" fill="#cecece"/><rect x="0.5" y="0.5" width="80" height="15" fill="none" stroke="#6c6462"/><rect x="1.5" y="1.5" width="80" height="15" fill="none" stroke="#fff"/><path d="M64 5 L74 5 L69 10 Z" fill="#000"/><g transform="translate(6.0,4) scale(0.875)"><path d="M4 0 L8 4 L5 4 L5 9 L3 9 L3 4 L0 4 Z" fill="#000"/></g><g transform="translate(15.5,4) scale(0.875)"><path d="M8 4 L4 0 L4 3 L0 3 L0 5 L4 5 L4 8 Z" fill="#000"/></g><g transform="translate(25.0,4) scale(0.875)"><path d="M0 4 L4 0 L4 3 L8 3 L8 5 L4 5 L4 8 Z" fill="#000"/></g></g><g transform="translate(1,170)"><rect x="0.5" y="0.5" width="15" height="15" rx="3" fill="#ffffff" stroke="#000"/><text x="8" y="12.5" font-family="Liberation Sans" font-size="11" font-style="italic" text-anchor="middle" fill="#000">I</text></g><g transform="translate(19,170)"><rect x="0.5" y="0.5" width="15" height="15" rx="3" fill="#00ffff" stroke="#000"/><text x="8" y="12.5" font-family="Liberation Sans" font-size="11" font-style="italic" text-anchor="middle" fill="#fff" stroke="#000" stroke-width="1.6" paint-order="stroke" transform="translate(8 0) scale(0.9 1) translate(-8 0)">A</text></g><g transform="translate(37,170)"><rect x="0.5" y="0.5" width="15" height="15" rx="3" fill="#ffffff" stroke="#000"/><text x="8" y="12.5" font-family="Liberation Sans" font-size="11" font-style="italic" text-anchor="middle" fill="#000">I</text></g><g transform="translate(82,170)"><rect x="0" y="0" width="81" height="17" fill="#cecece"/><rect x="0.5" y="0.5" width="80" height="15" fill="none" stroke="#6c6462"/><rect x="1.5" y="1.5" width="80" height="15" fill="none" stroke="#fff"/><path d="M64 5 L74 5 L69 10 Z" fill="#000"/><g transform="translate(6.0,4) scale(0.875)"><path d="M0 4 L4 0 L4 3 L8 3 L8 5 L4 5 L4 8 Z" fill="#000"/></g><g transform="translate(15.5,4) scale(0.875)"><path d="M8 4 L4 0 L4 3 L0 3 L0 5 L4 5 L4 8 Z" fill="#000"/></g><g transform="translate(25.0,4) scale(0.875)"><path d="M4 0 L8 4 L5 4 L5 9 L3 9 L3 4 L0 4 Z" fill="#000"/></g></g></svg>
<div class="a" style="left:919px;top:324px;width:14px;height:179px;background:#cecece;border-left:1px solid #6c6462"></div>
<div class="a" style="left:920px;top:325px;width:13px;height:1px;background:#fff"></div>
<div class="a" style="left:920px;top:325px;width:1px;height:13px;background:#fff"></div>
<svg class="a" style="left:923px;top:329px" width="8" height="4" viewBox="0 0 8 4" shape-rendering="crispEdges"><path d="M4 0 L8 4 L0 4 Z" fill="#000"/></svg>
<div class="a" style="left:920px;top:487px;width:13px;height:1px;background:#6c6462"></div>
<div class="a" style="left:920px;top:488px;width:13px;height:1px;background:#fff"></div>
<div class="a" style="left:920px;top:488px;width:1px;height:15px;background:#fff"></div>
<svg class="a" style="left:923px;top:493px" width="8" height="4" viewBox="0 0 8 4" shape-rendering="crispEdges"><path d="M0 0 L8 0 L4 4 Z" fill="#000"/></svg>
<div class="a" style="left:919px;top:339px;width:14px;height:57px;background:#9999cc;border:1px solid #000;border-right:none;box-shadow:inset 1px 1px #ccccff"></div>
<svg class="a" style="left:919px;top:339px" width="14" height="57" viewBox="0 0 14 57" shape-rendering="crispEdges"><rect x="3" y="3" width="1" height="1" fill="#000"/><rect x="7" y="3" width="1" height="1" fill="#000"/><rect x="11" y="3" width="1" height="1" fill="#000"/><rect x="5" y="5" width="1" height="1" fill="#000"/><rect x="9" y="5" width="1" height="1" fill="#000"/><rect x="3" y="7" width="1" height="1" fill="#000"/><rect x="7" y="7" width="1" height="1" fill="#000"/><rect x="11" y="7" width="1" height="1" fill="#000"/><rect x="5" y="9" width="1" height="1" fill="#000"/><rect x="9" y="9" width="1" height="1" fill="#000"/><rect x="3" y="11" width="1" height="1" fill="#000"/><rect x="7" y="11" width="1" height="1" fill="#000"/><rect x="11" y="11" width="1" height="1" fill="#000"/><rect x="5" y="13" width="1" height="1" fill="#000"/><rect x="9" y="13" width="1" height="1" fill="#000"/><rect x="3" y="15" width="1" height="1" fill="#000"/><rect x="7" y="15" width="1" height="1" fill="#000"/><rect x="11" y="15" width="1" height="1" fill="#000"/><rect x="5" y="17" width="1" height="1" fill="#000"/><rect x="9" y="17" width="1" height="1" fill="#000"/><rect x="3" y="19" width="1" height="1" fill="#000"/><rect x="7" y="19" width="1" height="1" fill="#000"/><rect x="11" y="19" width="1" height="1" fill="#000"/><rect x="5" y="21" width="1" height="1" fill="#000"/><rect x="9" y="21" width="1" height="1" fill="#000"/><rect x="3" y="23" width="1" height="1" fill="#000"/><rect x="7" y="23" width="1" height="1" fill="#000"/><rect x="11" y="23" width="1" height="1" fill="#000"/><rect x="5" y="25" width="1" height="1" fill="#000"/><rect x="9" y="25" width="1" height="1" fill="#000"/><rect x="3" y="27" width="1" height="1" fill="#000"/><rect x="7" y="27" width="1" height="1" fill="#000"/><rect x="11" y="27" width="1" height="1" fill="#000"/><rect x="5" y="29" width="1" height="1" fill="#000"/><rect x="9" y="29" width="1" height="1" fill="#000"/><rect x="3" y="31" width="1" height="1" fill="#000"/><rect x="7" y="31" width="1" height="1" fill="#000"/><rect x="11" y="31" width="1" height="1" fill="#000"/><rect x="5" y="33" width="1" height="1" fill="#000"/><rect x="9" y="33" width="1" height="1" fill="#000"/><rect x="3" y="35" width="1" height="1" fill="#000"/><rect x="7" y="35" width="1" height="1" fill="#000"/><rect x="11" y="35" width="1" height="1" fill="#000"/><rect x="5" y="37" width="1" height="1" fill="#000"/><rect x="9" y="37" width="1" height="1" fill="#000"/><rect x="3" y="39" width="1" height="1" fill="#000"/><rect x="7" y="39" width="1" height="1" fill="#000"/><rect x="11" y="39" width="1" height="1" fill="#000"/><rect x="5" y="41" width="1" height="1" fill="#000"/><rect x="9" y="41" width="1" height="1" fill="#000"/><rect x="3" y="43" width="1" height="1" fill="#000"/><rect x="7" y="43" width="1" height="1" fill="#000"/><rect x="11" y="43" width="1" height="1" fill="#000"/><rect x="5" y="45" width="1" height="1" fill="#000"/><rect x="9" y="45" width="1" height="1" fill="#000"/><rect x="3" y="47" width="1" height="1" fill="#000"/><rect x="7" y="47" width="1" height="1" fill="#000"/><rect x="11" y="47" width="1" height="1" fill="#000"/><rect x="5" y="49" width="1" height="1" fill="#000"/><rect x="9" y="49" width="1" height="1" fill="#000"/><rect x="3" y="51" width="1" height="1" fill="#000"/><rect x="7" y="51" width="1" height="1" fill="#000"/><rect x="11" y="51" width="1" height="1" fill="#000"/><rect x="5" y="53" width="1" height="1" fill="#000"/><rect x="9" y="53" width="1" height="1" fill="#000"/></svg>
<div class="a" style="left:743px;top:516px;width:50px;height:26px;border:1px solid #6c6462"></div>
<div class="a" style="left:744px;top:517px;width:50px;height:26px;border:1px solid #fff"></div>
<div class="a t" style="left:743px;width:51px;text-align:center;top:524px;font-size:12px;line-height:12px;font-weight:bold;color:#000;">Ok</div>
<div class="a" style="left:800px;top:516px;width:71px;height:26px;border:1px solid #6c6462"></div>
<div class="a" style="left:801px;top:517px;width:71px;height:26px;border:1px solid #fff"></div>
<div class="a t" style="left:800px;width:72px;text-align:center;top:524px;font-size:12px;line-height:12px;font-weight:bold;color:#000;">Cancel</div>
<div class="a" style="left:815px;top:521px;width:42px;height:18px;border:1px solid #9999cc"></div>
<div class="a" style="left:877px;top:516px;width:58px;height:26px;border:1px solid #6c6462"></div>
<div class="a" style="left:878px;top:517px;width:58px;height:26px;border:1px solid #fff"></div>
<div class="a t" style="left:877px;width:59px;text-align:center;top:524px;font-size:12px;line-height:12px;font-weight:bold;color:#000;">Help</div>
<div class="a" style="left:6px;top:423px;width:332px;height:401px;background:#cecece;box-shadow:inset 1px 1px #e4e4e4,inset -1px -1px #4c5446,inset 2px 2px #fff,inset -2px -2px #808080"></div>
<div class="a" style="left:10px;top:427px;width:324px;height:18px;background:linear-gradient(to right,#848484 0px,#848484 52px,#8b8b8b 52px,#8b8b8b 84px,#929292 84px,#929292 117px,#999999 117px,#999999 149px,#a0a0a0 149px,#a0a0a0 181px,#a6a6a6 181px,#a6a6a6 214px,#adadad 214px,#adadad 246px,#b4b4b4 246px,#b4b4b4 278px,#bbbbbb 278px,#bbbbbb 310px,#c2c2c2 310px,#c2c2c2 324px)"></div>
<svg class="a" style="left:12px;top:428px" width="16" height="16" viewBox="0 0 16 16" shape-rendering="crispEdges"><g shape-rendering="geometricPrecision"><path d="M1.5 5.5 L6 2.5 L14.5 6.5 L14.5 12.5 L10 15 L1.5 10.5 Z" fill="#30d8f0"/><path d="M1.5 8 L9.5 10 L14.5 9 L14.5 12.5 L10 15 L1.5 10.5 Z" fill="#60d8a0"/><path d="M3 4.5 L6 2.5 L12 5.5 L9.5 7.5 Z" fill="#e8ffff"/><path d="M11 9 L13 8 L13 12 L11 13 Z" fill="#108810"/><path d="M1.5 5.5 L1.5 10.5 L10 15 M10 8 L10 15" stroke="#e09010" fill="none"/><path d="M1.5 5.5 L6 2.5 L14.5 6.5 L14.5 12.5 L10 15" stroke="#6a2a10" fill="none" stroke-dasharray="1.5 1"/><path d="M2.5 7.5 L9 9.5 L11 9" stroke="#d07010" stroke-dasharray="1.5 1.5" fill="none"/></g></svg>
<div class="a t" style="left:30px;top:431px;font-size:11px;line-height:11px;font-weight:bold;color:#d4d4d4;letter-spacing:0.21px">Life Room Editor</div>
<div class="a" style="left:316px;top:429px;width:16px;height:14px;background:#cecece;box-shadow:inset -1px -1px #4c5446,inset 1px 1px #fff,inset -2px -2px #808080"></div>
<svg class="a" style="left:320px;top:432px" width="8" height="7" viewBox="0 0 8 7" shape-rendering="crispEdges"><path d="M0 0h2v1h1v1h2v-1h1v-1h2v1h-1v1h-1v1h-1v1h1v1h1v1h1v1h-2v-1h-1v-1h-2v1h-1v1h-2v-1h1v-1h1v-1h1v-1h-1v-1h-1v-1h-1z" fill="#000"/></svg>
<div class="a" style="left:298px;top:429px;width:16px;height:14px;background:#cecece;box-shadow:inset -1px -1px #4c5446,inset 1px 1px #fff,inset -2px -2px #808080"></div>
<div class="a" style="left:301px;top:431px;width:9px;height:9px;border:1px solid #000;border-top-width:2px"></div>
<div class="a" style="left:282px;top:429px;width:16px;height:14px;background:#cecece;box-shadow:inset -1px -1px #4c5446,inset 1px 1px #fff,inset -2px -2px #808080"></div>
<div class="a" style="left:286px;top:438px;width:6px;height:2px;background:#000"></div>
<div class="a" style="left:13px;top:448px;width:23px;height:23px;border:1px solid #6c6462"></div>
<div class="a" style="left:14px;top:449px;width:23px;height:23px;border:1px solid #fff"></div>
<svg class="a" style="left:13px;top:448px" width="24" height="24" viewBox="0 0 24 24" shape-rendering="crispEdges"><rect x="6" y="5" width="8" height="1" fill="#000"/><rect x="6" y="5" width="1" height="12" fill="#000"/><rect x="6" y="16" width="6" height="1" fill="#000"/><rect x="13" y="6" width="1" height="1" fill="#000"/><rect x="14" y="7" width="1" height="5" fill="#000"/><rect x="7" y="6" width="6" height="10" fill="#fff"/><rect x="8" y="7" width="6" height="9" fill="#c8c8f0"/><path d="M15.5 12 V19 M12 15.5 H19 M13 13 L18 18 M18 13 L13 18" stroke="#000" stroke-width="1" shape-rendering="geometricPrecision"/></svg>
<div class="a" style="left:46px;top:448px;width:23px;height:23px;border:1px solid #6c6462"></div>
<div class="a" style="left:47px;top:449px;width:23px;height:23px;border:1px solid #fff"></div>
<svg class="a" style="left:46px;top:448px" width="24" height="24" viewBox="0 0 24 24" shape-rendering="crispEdges"><rect x="8" y="9" width="5" height="1" fill="#000"/><rect x="13" y="8" width="5" height="1" fill="#703020"/><rect x="17" y="9" width="1" height="8" fill="#000"/><rect x="8" y="10" width="9" height="1" fill="#fff"/><rect x="14" y="9" width="3" height="1" fill="#f0d8b8"/><rect x="5" y="11" width="11" height="1" fill="#000"/><rect x="6" y="12" width="10" height="1" fill="#fff"/><rect x="15" y="10" width="2" height="5" fill="#f0d0a8"/><rect x="5" y="12" width="1" height="1" fill="#000"/><rect x="6" y="13" width="1" height="3" fill="#000"/><rect x="7" y="16" width="11" height="1" fill="#000"/><rect x="7" y="13" width="9" height="3" fill="#f0d8b8"/><rect x="8" y="14" width="7" height="1" fill="#c8a888"/></svg>
<div class="a" style="left:70px;top:448px;width:23px;height:23px;border:1px solid #6c6462"></div>
<div class="a" style="left:71px;top:449px;width:23px;height:23px;border:1px solid #fff"></div>
<svg class="a" style="left:70px;top:448px" width="24" height="24" viewBox="0 0 24 24" shape-rendering="crispEdges"><rect x="7" y="6" width="10" height="1" fill="#000"/><rect x="7" y="17" width="10" height="1" fill="#000"/><rect x="6" y="7" width="1" height="10" fill="#000"/><rect x="17" y="7" width="1" height="10" fill="#000"/><rect x="7" y="7" width="10" height="10" fill="#fff"/><rect x="8" y="7" width="1" height="4" fill="#806860"/><rect x="9" y="7" width="2" height="4" fill="#d0d0d0"/><rect x="12" y="7" width="3" height="4" fill="#000"/><rect x="13" y="8" width="1" height="2" fill="#fff"/><rect x="8" y="12" width="8" height="1" fill="#806860"/><rect x="8" y="12" width="1" height="5" fill="#806860"/><rect x="15" y="12" width="1" height="5" fill="#806860"/><rect x="10" y="14" width="4" height="2" fill="#c8c8c8"/><rect x="8" y="18" width="9" height="1" fill="#fff"/><rect x="18" y="8" width="1" height="9" fill="#fff"/></svg>
<div class="a" style="left:94px;top:448px;width:23px;height:23px;border:1px solid #6c6462"></div>
<div class="a" style="left:95px;top:449px;width:23px;height:23px;border:1px solid #fff"></div>
<svg class="a" style="left:94px;top:448px" width="24" height="24" viewBox="0 0 24 24" shape-rendering="crispEdges"><rect x="6" y="5" width="9" height="1" fill="#000"/><rect x="5" y="6" width="1" height="9" fill="#000"/><rect x="15" y="6" width="1" height="6" fill="#000"/><rect x="6" y="15" width="3" height="1" fill="#000"/><rect x="6" y="6" width="9" height="9" fill="#fff"/><rect x="7" y="6" width="1" height="3" fill="#806860"/><rect x="8" y="6" width="1" height="3" fill="#d0d0d0"/><rect x="10" y="6" width="3" height="3" fill="#000"/><rect x="11" y="7" width="1" height="1" fill="#fff"/><rect x="7" y="10" width="2" height="1" fill="#806860"/><rect x="9" y="11" width="10" height="1" fill="#000"/><rect x="9" y="12" width="1" height="6" fill="#000"/><rect x="18" y="12" width="1" height="6" fill="#000"/><rect x="9" y="18" width="10" height="1" fill="#000"/><rect x="10" y="12" width="8" height="1" fill="#3040a0"/><rect x="10" y="13" width="8" height="5" fill="#fff"/><rect x="11" y="14" width="1" height="3" fill="#000"/><rect x="13" y="15" width="4" height="1" fill="#c0c0c0"/><rect x="10" y="19" width="9" height="1" fill="#fff"/><rect x="19" y="12" width="1" height="7" fill="#fff"/></svg>
<div class="a" style="left:129px;top:448px;width:23px;height:23px;border:1px solid #6c6462"></div>
<div class="a" style="left:130px;top:449px;width:23px;height:23px;border:1px solid #fff"></div>
<svg class="a" style="left:129px;top:448px" width="24" height="24" viewBox="0 0 24 24" shape-rendering="crispEdges"><rect x="3" y="5" width="17" height="15" fill="#989898"/><rect x="3" y="5" width="8" height="4" fill="#d00010"/><rect x="12" y="5" width="8" height="4" fill="#d00010"/><rect x="3" y="10" width="4" height="4" fill="#e80018"/><rect x="8" y="10" width="8" height="4" fill="#e80018"/><rect x="17" y="10" width="3" height="4" fill="#e80018"/><rect x="3" y="15" width="8" height="4" fill="#d00010"/><rect x="12" y="15" width="8" height="4" fill="#d00010"/></svg>
<div class="a" style="left:153px;top:448px;width:23px;height:23px;border:1px solid #6c6462"></div>
<div class="a" style="left:154px;top:449px;width:23px;height:23px;border:1px solid #fff"></div>
<svg class="a" style="left:153px;top:448px" width="24" height="24" viewBox="0 0 24 24" shape-rendering="crispEdges"><rect x="3.5" y="4.5" width="16" height="15" rx="3.5" fill="#0080ff" stroke="#000" shape-rendering="geometricPrecision"/></svg>
<div class="a" style="left:187px;top:448px;width:23px;height:23px;border:1px solid #6c6462"></div>
<div class="a" style="left:188px;top:449px;width:23px;height:23px;border:1px solid #fff"></div>
<svg class="a" style="left:187px;top:448px" width="24" height="24" viewBox="0 0 24 24" shape-rendering="crispEdges"><path d="M10.5 10.5 L13 9 L11.8 16" stroke="#000" stroke-width="1.4" fill="none" shape-rendering="geometricPrecision"/></svg>
<div class="a" style="left:220px;top:448px;width:23px;height:23px;border:1px solid #6c6462"></div>
<div class="a" style="left:221px;top:449px;width:23px;height:23px;border:1px solid #fff"></div>
<svg class="a" style="left:220px;top:448px" width="24" height="24" viewBox="0 0 24 24" shape-rendering="crispEdges"><path d="M11 17 L9 14 L15 9 L18 12 Z" fill="#f0f000" stroke="#d0c000" shape-rendering="geometricPrecision"/><rect x="16" y="4" width="2" height="6" fill="#e02040"/><rect x="17" y="4" width="1" height="3" fill="#40a0e0"/><rect x="5" y="7" width="1" height="1" fill="#d040d0"/><rect x="5" y="10" width="2" height="2" fill="#f0f080"/><rect x="4" y="12" width="1" height="1" fill="#40c0e0"/><rect x="6" y="13" width="1" height="1" fill="#e04040"/><rect x="7" y="9" width="1" height="1" fill="#80c080"/></svg>
<div class="a" style="left:10px;top:474px;width:323px;height:308px;border:1px solid #6c6462"></div>
<div class="a" style="left:11px;top:475px;width:323px;height:308px;border:1px solid #fff"></div>
<div class="a" style="left:11px;top:475px;width:300px;height:300px;background:#0080ff"></div>
<svg class="a" style="left:0;top:0" width="952" height="904" shape-rendering="crispEdges"><rect x="151" y="483" width="6" height="2" fill="#d00040"/><rect x="77" y="499" width="2" height="6" fill="#f0b040"/><rect x="41" y="541" width="8" height="2" fill="#a040e0"/><rect x="141" y="551" width="2" height="6" fill="#6040a0"/><rect x="105" y="565" width="12" height="2" fill="#ff3030"/><rect x="137" y="577" width="2" height="10" fill="#40e040"/><rect x="103" y="597" width="2" height="8" fill="#e0e0a0"/><rect x="97" y="603" width="8" height="2" fill="#e0e0a0"/><rect x="105" y="601" width="2" height="6" fill="#f0e060"/><rect x="33" y="603" width="6" height="2" fill="#ffc0c0"/><rect x="135" y="619" width="6" height="2" fill="#f0f080"/><rect x="53" y="617" width="2" height="10" fill="#a0f020"/><rect x="33" y="623" width="6" height="2" fill="#e04060"/><rect x="197" y="487" width="6" height="2" fill="#20a080"/><rect x="179" y="495" width="2" height="6" fill="#a0c020"/><rect x="243" y="487" width="2" height="14" fill="#d020c0"/><rect x="225" y="503" width="6" height="2" fill="#ff1030"/><rect x="247" y="515" width="2" height="6" fill="#70a090"/><rect x="205" y="527" width="14" height="2" fill="#e06070"/><rect x="197" y="539" width="14" height="2" fill="#2040ff"/><rect x="191" y="547" width="2" height="8" fill="#c02040"/><rect x="285" y="551" width="2" height="8" fill="#ff20a0"/><rect x="289" y="555" width="2" height="6" fill="#603020"/><rect x="249" y="557" width="2" height="10" fill="#307070"/><rect x="191" y="581" width="6" height="2" fill="#20f060"/><rect x="219" y="593" width="2" height="14" fill="#7050a0"/><rect x="197" y="623" width="2" height="12" fill="#c08020"/><rect x="13" y="627" width="12" height="2" fill="#60c020"/><rect x="127" y="635" width="14" height="2" fill="#d07080"/><rect x="157" y="631" width="12" height="2" fill="#c0b070"/><rect x="13" y="651" width="2" height="14" fill="#20a0a0"/><rect x="99" y="659" width="2" height="14" fill="#b06040"/><rect x="115" y="663" width="6" height="2" fill="#60c020"/><rect x="129" y="675" width="14" height="2" fill="#408060"/><rect x="91" y="695" width="6" height="2" fill="#408040"/><rect x="135" y="691" width="2" height="6" fill="#207090"/><rect x="43" y="727" width="6" height="2" fill="#ff20a0"/><rect x="131" y="733" width="2" height="6" fill="#f0f000"/><rect x="131" y="749" width="2" height="8" fill="#ff60c0"/><rect x="103" y="763" width="12" height="2" fill="#505070"/><rect x="151" y="765" width="6" height="2" fill="#f0c020"/><rect x="165" y="639" width="10" height="2" fill="#a0f020"/><rect x="183" y="657" width="2" height="6" fill="#f0c0c0"/><rect x="243" y="677" width="2" height="14" fill="#ff8020"/><rect x="253" y="705" width="2" height="14" fill="#7070a0"/><rect x="279" y="707" width="10" height="2" fill="#505090"/><rect x="257" y="721" width="14" height="2" fill="#000000"/><rect x="163" y="723" width="2" height="6" fill="#7080c0"/><rect x="193" y="725" width="14" height="2" fill="#c0d8f0"/><rect x="165" y="737" width="8" height="2" fill="#00e0e0"/><rect x="249" y="767" width="2" height="6" fill="#a0e080"/></svg>
<div class="a" style="left:136px;top:788px;width:50px;height:26px;border:1px solid #6c6462"></div>
<div class="a" style="left:137px;top:789px;width:50px;height:26px;border:1px solid #fff"></div>
<div class="a t" style="left:136px;width:51px;text-align:center;top:796px;font-size:12px;line-height:12px;font-weight:bold;color:#000;">Ok</div>
<div class="a" style="left:192px;top:788px;width:71px;height:26px;border:1px solid #6c6462"></div>
<div class="a" style="left:193px;top:789px;width:71px;height:26px;border:1px solid #fff"></div>
<div class="a t" style="left:192px;width:72px;text-align:center;top:796px;font-size:12px;line-height:12px;font-weight:bold;color:#000;">Cancel</div>
<div class="a" style="left:270px;top:788px;width:58px;height:26px;border:1px solid #6c6462"></div>
<div class="a" style="left:271px;top:789px;width:58px;height:26px;border:1px solid #fff"></div>
<div class="a t" style="left:270px;width:59px;text-align:center;top:796px;font-size:12px;line-height:12px;font-weight:bold;color:#000;">Help</div>
<div class="a" style="left:341px;top:579px;width:520px;height:320px;background:#cecece;box-shadow:inset 1px 1px #e4e4e4,inset -1px -1px #4c5446,inset 2px 2px #fff,inset -2px -2px #808080"></div>
<div class="a" style="left:345px;top:583px;width:512px;height:18px;background:linear-gradient(to right,#848484 0px,#848484 80px,#8c8c8c 80px,#8c8c8c 136px,#949494 136px,#949494 191px,#9b9b9b 191px,#9b9b9b 247px,#a3a3a3 247px,#a3a3a3 303px,#ababab 303px,#ababab 358px,#b2b2b2 358px,#b2b2b2 414px,#bababa 414px,#bababa 470px,#c2c2c2 470px,#c2c2c2 512px)"></div>
<svg class="a" style="left:347px;top:584px" width="16" height="16" viewBox="0 0 16 16" shape-rendering="crispEdges"><rect x="0" y="0" width="16" height="16" fill="#ccccff"/><rect x="1" y="1" width="15" height="15" fill="#333366"/><rect x="1" y="1" width="14" height="14" fill="#e8e8f0"/><rect x="3" y="3" width="1" height="11" fill="#604040"/><rect x="3" y="13" width="11" height="1" fill="#604040"/><path d="M4 9 L7 8 L10 9 L14 6" stroke="#8080e0" fill="none" shape-rendering="geometricPrecision"/><path d="M4 10 L8 9 L11 10 L14 8" stroke="#ff8080" fill="none" shape-rendering="geometricPrecision"/></svg>
<div class="a t" style="left:365px;top:587px;font-size:11px;line-height:11px;font-weight:bold;color:#d4d4d4;letter-spacing:0.65px">Graph Viewer [D:\Work\aqua\Simulation-info-1013871283015.log]</div>
<div class="a" style="left:839px;top:585px;width:16px;height:14px;background:#cecece;box-shadow:inset -1px -1px #4c5446,inset 1px 1px #fff,inset -2px -2px #808080"></div>
<svg class="a" style="left:843px;top:588px" width="8" height="7" viewBox="0 0 8 7" shape-rendering="crispEdges"><path d="M0 0h2v1h1v1h2v-1h1v-1h2v1h-1v1h-1v1h-1v1h1v1h1v1h1v1h-2v-1h-1v-1h-2v1h-1v1h-2v-1h1v-1h1v-1h1v-1h-1v-1h-1v-1h-1z" fill="#000"/></svg>
<div class="a" style="left:821px;top:585px;width:16px;height:14px;background:#cecece;box-shadow:inset -1px -1px #4c5446,inset 1px 1px #fff,inset -2px -2px #808080"></div>
<div class="a" style="left:824px;top:587px;width:9px;height:9px;border:1px solid #000;border-top-width:2px"></div>
<div class="a" style="left:805px;top:585px;width:16px;height:14px;background:#cecece;box-shadow:inset -1px -1px #4c5446,inset 1px 1px #fff,inset -2px -2px #808080"></div>
<div class="a" style="left:809px;top:594px;width:6px;height:2px;background:#000"></div>
<div class="a" style="left:348px;top:604px;width:23px;height:23px;border:1px solid #6c6462"></div>
<div class="a" style="left:349px;top:605px;width:23px;height:23px;border:1px solid #fff"></div>
<svg class="a" style="left:348px;top:604px" width="24" height="24" viewBox="0 0 24 24" shape-rendering="crispEdges"><rect x="8" y="9" width="5" height="1" fill="#000"/><rect x="13" y="8" width="5" height="1" fill="#703020"/><rect x="17" y="9" width="1" height="8" fill="#000"/><rect x="8" y="10" width="9" height="1" fill="#fff"/><rect x="14" y="9" width="3" height="1" fill="#f0d8b8"/><rect x="5" y="11" width="11" height="1" fill="#000"/><rect x="6" y="12" width="10" height="1" fill="#fff"/><rect x="15" y="10" width="2" height="5" fill="#f0d0a8"/><rect x="5" y="12" width="1" height="1" fill="#000"/><rect x="6" y="13" width="1" height="3" fill="#000"/><rect x="7" y="16" width="11" height="1" fill="#000"/><rect x="7" y="13" width="9" height="3" fill="#f0d8b8"/><rect x="8" y="14" width="7" height="1" fill="#c8a888"/></svg>
<div class="a" style="left:382px;top:604px;width:23px;height:23px;border:1px solid #6c6462"></div>
<div class="a" style="left:383px;top:605px;width:23px;height:23px;border:1px solid #fff"></div>
<svg class="a" style="left:382px;top:604px" width="24" height="24" viewBox="0 0 24 24" shape-rendering="crispEdges"><rect x="6" y="5" width="9" height="1" fill="#000"/><rect x="5" y="6" width="1" height="9" fill="#000"/><rect x="15" y="6" width="1" height="6" fill="#000"/><rect x="6" y="15" width="3" height="1" fill="#000"/><rect x="6" y="6" width="9" height="9" fill="#fff"/><rect x="7" y="6" width="1" height="3" fill="#806860"/><rect x="8" y="6" width="1" height="3" fill="#d0d0d0"/><rect x="10" y="6" width="3" height="3" fill="#000"/><rect x="11" y="7" width="1" height="1" fill="#fff"/><rect x="7" y="10" width="2" height="1" fill="#806860"/><rect x="9" y="11" width="10" height="1" fill="#000"/><rect x="9" y="12" width="1" height="6" fill="#000"/><rect x="18" y="12" width="1" height="6" fill="#000"/><rect x="9" y="18" width="10" height="1" fill="#000"/><rect x="10" y="12" width="8" height="1" fill="#3040a0"/><rect x="10" y="13" width="8" height="5" fill="#fff"/><rect x="11" y="14" width="1" height="3" fill="#000"/><rect x="13" y="15" width="4" height="1" fill="#c0c0c0"/><rect x="10" y="19" width="9" height="1" fill="#fff"/><rect x="19" y="12" width="1" height="7" fill="#fff"/></svg>
<div class="a" style="left:406px;top:604px;width:23px;height:23px;border:1px solid #6c6462"></div>
<div class="a" style="left:407px;top:605px;width:23px;height:23px;border:1px solid #fff"></div>
<svg class="a" style="left:406px;top:604px" width="24" height="24" viewBox="0 0 24 24" shape-rendering="crispEdges"><rect x="9" y="5" width="7" height="6" fill="#000"/><rect x="10" y="6" width="5" height="5" fill="#c0c0f0"/><rect x="5" y="11" width="14" height="7" fill="#000"/><rect x="6" y="12" width="12" height="5" fill="#fff"/><rect x="7" y="14" width="10" height="1" fill="#c0c0c0"/><rect x="14" y="14" width="3" height="1" fill="#80e040"/></svg>
<div class="a" style="left:450px;top:604px;width:23px;height:23px;border:1px solid #6c6462"></div>
<div class="a" style="left:451px;top:605px;width:23px;height:23px;border:1px solid #fff"></div>
<svg class="a" style="left:450px;top:604px" width="24" height="24" viewBox="0 0 24 24" shape-rendering="crispEdges"><circle cx="10" cy="10" r="4.5" fill="#c8c8f0" stroke="#303070" stroke-width="1.5" shape-rendering="geometricPrecision"/><path d="M14 14 L19 19" stroke="#a04010" stroke-width="2.5" shape-rendering="geometricPrecision"/></svg>
<div class="a" style="left:484px;top:604px;width:23px;height:23px;border:1px solid #6c6462"></div>
<div class="a" style="left:485px;top:605px;width:23px;height:23px;border:1px solid #fff"></div>
<svg class="a" style="left:484px;top:604px" width="24" height="24" viewBox="0 0 24 24" shape-rendering="crispEdges"><rect x="5" y="5" width="6" height="6" fill="#706864"/><rect x="6" y="6" width="4" height="4" fill="#fff"/><rect x="11" y="6" width="1" height="5" fill="#fff"/><rect x="6" y="11" width="5" height="1" fill="#fff"/><path d="M7 7.5 L8.3 9.8 L10.8 5" stroke="#000" stroke-width="1.6" fill="none" shape-rendering="geometricPrecision"/><rect x="5" y="12" width="6" height="6" fill="#706864"/><rect x="6" y="13" width="4" height="4" fill="#fff"/><rect x="7" y="14" width="2" height="2" fill="#d8d8d8"/><rect x="11" y="13" width="1" height="5" fill="#fff"/><rect x="6" y="18" width="5" height="1" fill="#fff"/><rect x="13" y="7" width="5" height="2" fill="#4a62a0"/><rect x="13" y="14" width="5" height="2" fill="#4a62a0"/></svg>
<div class="a" style="left:508px;top:604px;width:24px;height:24px;background:#999999"></div>
<div class="a" style="left:508px;top:604px;width:23px;height:23px;border:1px solid #6c6462"></div>
<div class="a" style="left:509px;top:605px;width:23px;height:23px;border:1px solid #fff"></div>
<svg class="a" style="left:508px;top:604px" width="24" height="24" viewBox="0 0 24 24" shape-rendering="crispEdges"><path d="M5 17 C 10 17, 10 6, 17 6" stroke="#000" fill="none" stroke-width="1.2" shape-rendering="geometricPrecision"/></svg>
<div class="a" style="left:532px;top:604px;width:24px;height:24px;background:#999999"></div>
<div class="a" style="left:532px;top:604px;width:23px;height:23px;border:1px solid #6c6462"></div>
<div class="a" style="left:533px;top:605px;width:23px;height:23px;border:1px solid #fff"></div>
<svg class="a" style="left:532px;top:604px" width="24" height="24" viewBox="0 0 24 24" shape-rendering="crispEdges"><rect x="5.5" y="16.5" width="2" height="2" fill="#fff" stroke="#000" shape-rendering="geometricPrecision"/><rect x="8.5" y="13.5" width="2" height="2" fill="#fff" stroke="#000" shape-rendering="geometricPrecision"/><rect x="11.5" y="10.5" width="2" height="2" fill="#fff" stroke="#000" shape-rendering="geometricPrecision"/><rect x="14.5" y="7.5" width="2" height="2" fill="#fff" stroke="#000" shape-rendering="geometricPrecision"/></svg>
<div class="a" style="left:556px;top:604px;width:23px;height:23px;border:1px solid #6c6462"></div>
<div class="a" style="left:557px;top:605px;width:23px;height:23px;border:1px solid #fff"></div>
<svg class="a" style="left:556px;top:604px" width="24" height="24" viewBox="0 0 24 24" shape-rendering="crispEdges"><text x="12" y="15" font-family="Liberation Sans" font-size="8" text-anchor="middle" fill="#000" font-style="italic">(x,y)</text></svg>
<div class="a" style="left:589px;top:604px;width:23px;height:23px;border:1px solid #6c6462"></div>
<div class="a" style="left:590px;top:605px;width:23px;height:23px;border:1px solid #fff"></div>
<svg class="a" style="left:589px;top:604px" width="24" height="24" viewBox="0 0 24 24" shape-rendering="crispEdges"><g shape-rendering="geometricPrecision"><path d="M6 11 L13 7.5" stroke="#000" stroke-width="4.2" stroke-linecap="square"/><path d="M11.5 4 L15 8 L11 9.5 Z" fill="#000"/><path d="M18 11 L11 14.5" stroke="#000" stroke-width="4.2" stroke-linecap="square"/><path d="M12.5 19 L9 15 L13 13.5 Z" fill="#000"/><path d="M6.3 11 L13 7.6" stroke="#b8b8f0" stroke-width="2.2"/><path d="M17.7 11 L11 14.4" stroke="#b8b8f0" stroke-width="2.2"/></g></svg>
<div class="a" style="left:345px;top:629px;width:512px;height:245px;background:#fff"></div>
<div class="a" style="left:345px;top:629px;width:511px;height:244px;border:1px solid #6c6462"></div>
<div class="a" style="left:346px;top:630px;width:511px;height:244px;border:1px solid #fff"></div>
<svg class="a" style="left:0;top:0" width="952" height="904"><polyline points="356.5,862.5 372.5,862.5 387.5,858.5 403.5,852.5 419.5,846.5 435.5,838.5 451.5,830.5 466.5,827.5 482.5,824.5 498.5,812.5 514.5,818.5 529.5,819.5 545.5,814.5 561.5,804.5 577.5,797.5 592.5,792.5 608.5,772.5 624.5,756.5 640.5,733.5 656.5,743.5 671.5,716.5 687.5,695.5 703.5,686.5 719.5,678.5 734.5,676.5 750.5,650.5 766.5,643.5 782.5,666.5 797.5,641.5 813.5,665.5 829.5,674.5 845.5,662.5" fill="none" stroke="#5a9a6a" stroke-width="1"/><rect x="354.5" y="860.5" width="4" height="4" fill="#fff" stroke="#5a9a6a"/><rect x="356" y="862" width="1" height="1" fill="#5a9a6a"/><rect x="370.5" y="860.5" width="4" height="4" fill="#fff" stroke="#5a9a6a"/><rect x="372" y="862" width="1" height="1" fill="#5a9a6a"/><rect x="385.5" y="856.5" width="4" height="4" fill="#fff" stroke="#5a9a6a"/><rect x="387" y="858" width="1" height="1" fill="#5a9a6a"/><rect x="401.5" y="850.5" width="4" height="4" fill="#fff" stroke="#5a9a6a"/><rect x="403" y="852" width="1" height="1" fill="#5a9a6a"/><rect x="417.5" y="844.5" width="4" height="4" fill="#fff" stroke="#5a9a6a"/><rect x="419" y="846" width="1" height="1" fill="#5a9a6a"/><rect x="433.5" y="836.5" width="4" height="4" fill="#fff" stroke="#5a9a6a"/><rect x="435" y="838" width="1" height="1" fill="#5a9a6a"/><rect x="449.5" y="828.5" width="4" height="4" fill="#fff" stroke="#5a9a6a"/><rect x="451" y="830" width="1" height="1" fill="#5a9a6a"/><rect x="464.5" y="825.5" width="4" height="4" fill="#fff" stroke="#5a9a6a"/><rect x="466" y="827" width="1" height="1" fill="#5a9a6a"/><rect x="480.5" y="822.5" width="4" height="4" fill="#fff" stroke="#5a9a6a"/><rect x="482" y="824" width="1" height="1" fill="#5a9a6a"/><rect x="496.5" y="810.5" width="4" height="4" fill="#fff" stroke="#5a9a6a"/><rect x="498" y="812" width="1" height="1" fill="#5a9a6a"/><rect x="512.5" y="816.5" width="4" height="4" fill="#fff" stroke="#5a9a6a"/><rect x="514" y="818" width="1" height="1" fill="#5a9a6a"/><rect x="527.5" y="817.5" width="4" height="4" fill="#fff" stroke="#5a9a6a"/><rect x="529" y="819" width="1" height="1" fill="#5a9a6a"/><rect x="543.5" y="812.5" width="4" height="4" fill="#fff" stroke="#5a9a6a"/><rect x="545" y="814" width="1" height="1" fill="#5a9a6a"/><rect x="559.5" y="802.5" width="4" height="4" fill="#fff" stroke="#5a9a6a"/><rect x="561" y="804" width="1" height="1" fill="#5a9a6a"/><rect x="575.5" y="795.5" width="4" height="4" fill="#fff" stroke="#5a9a6a"/><rect x="577" y="797" width="1" height="1" fill="#5a9a6a"/><rect x="590.5" y="790.5" width="4" height="4" fill="#fff" stroke="#5a9a6a"/><rect x="592" y="792" width="1" height="1" fill="#5a9a6a"/><rect x="606.5" y="770.5" width="4" height="4" fill="#fff" stroke="#5a9a6a"/><rect x="608" y="772" width="1" height="1" fill="#5a9a6a"/><rect x="622.5" y="754.5" width="4" height="4" fill="#fff" stroke="#5a9a6a"/><rect x="624" y="756" width="1" height="1" fill="#5a9a6a"/><rect x="638.5" y="731.5" width="4" height="4" fill="#fff" stroke="#5a9a6a"/><rect x="640" y="733" width="1" height="1" fill="#5a9a6a"/><rect x="654.5" y="741.5" width="4" height="4" fill="#fff" stroke="#5a9a6a"/><rect x="656" y="743" width="1" height="1" fill="#5a9a6a"/><rect x="669.5" y="714.5" width="4" height="4" fill="#fff" stroke="#5a9a6a"/><rect x="671" y="716" width="1" height="1" fill="#5a9a6a"/><rect x="685.5" y="693.5" width="4" height="4" fill="#fff" stroke="#5a9a6a"/><rect x="687" y="695" width="1" height="1" fill="#5a9a6a"/><rect x="701.5" y="684.5" width="4" height="4" fill="#fff" stroke="#5a9a6a"/><rect x="703" y="686" width="1" height="1" fill="#5a9a6a"/><rect x="717.5" y="676.5" width="4" height="4" fill="#fff" stroke="#5a9a6a"/><rect x="719" y="678" width="1" height="1" fill="#5a9a6a"/><rect x="732.5" y="674.5" width="4" height="4" fill="#fff" stroke="#5a9a6a"/><rect x="734" y="676" width="1" height="1" fill="#5a9a6a"/><rect x="748.5" y="648.5" width="4" height="4" fill="#fff" stroke="#5a9a6a"/><rect x="750" y="650" width="1" height="1" fill="#5a9a6a"/><rect x="764.5" y="641.5" width="4" height="4" fill="#fff" stroke="#5a9a6a"/><rect x="766" y="643" width="1" height="1" fill="#5a9a6a"/><rect x="780.5" y="664.5" width="4" height="4" fill="#fff" stroke="#5a9a6a"/><rect x="782" y="666" width="1" height="1" fill="#5a9a6a"/><rect x="795.5" y="639.5" width="4" height="4" fill="#fff" stroke="#5a9a6a"/><rect x="797" y="641" width="1" height="1" fill="#5a9a6a"/><rect x="811.5" y="663.5" width="4" height="4" fill="#fff" stroke="#5a9a6a"/><rect x="813" y="665" width="1" height="1" fill="#5a9a6a"/><rect x="827.5" y="672.5" width="4" height="4" fill="#fff" stroke="#5a9a6a"/><rect x="829" y="674" width="1" height="1" fill="#5a9a6a"/><rect x="843.5" y="660.5" width="4" height="4" fill="#fff" stroke="#5a9a6a"/><rect x="845" y="662" width="1" height="1" fill="#5a9a6a"/></svg>
<div class="a" style="left:345px;top:874px;width:512px;height:21px;box-shadow:inset 2px 2px #6c6462,inset -2px -2px #fff"></div>
<div class="a t" style="left:350px;top:880px;font-size:12px;line-height:12px;font-weight:bold;color:#000;">(2.05e3, 0.55e2)</div>
</div></body></html>
